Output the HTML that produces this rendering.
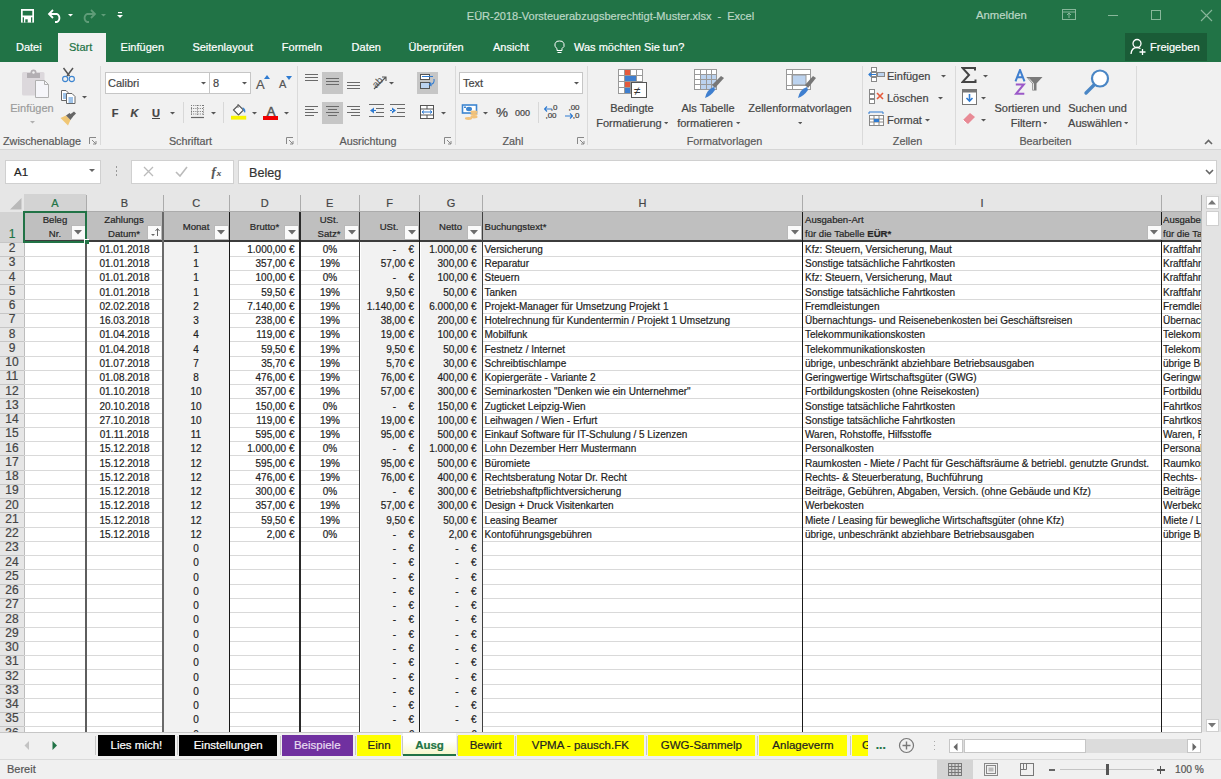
<!DOCTYPE html><html><head><meta charset="utf-8"><style>
html,body{margin:0;padding:0;}
body{width:1221px;height:779px;overflow:hidden;position:relative;background:#f1f1f1;font-family:"Liberation Sans",sans-serif;}
.t{position:absolute;white-space:nowrap;-webkit-text-stroke:0.2px currentColor;}
.r{position:absolute;}
</style></head><body>
<div class="r" style="left:0px;top:0px;width:1221px;height:62px;background:#217346;"></div>
<svg class="r" style="left:21px;top:9px;" width="13" height="14" viewBox="0 0 13 14"><rect x="0" y="0" width="13" height="13.6" fill="#fff"/><rect x="1.7" y="1.8" width="9.6" height="4.7" fill="#217346"/><rect x="1.7" y="8.3" width="1.3" height="5.3" fill="#217346"/><rect x="10" y="8.3" width="1.3" height="5.3" fill="#217346"/><rect x="4.3" y="10.3" width="2.4" height="3.3" fill="#217346"/></svg>
<svg class="r" style="left:47px;top:8px;" width="16" height="15" viewBox="0 0 16 15"><path d="M3 6 H10 A4.5 4.5 0 0 1 10 14 H8" fill="none" stroke="#fff" stroke-width="1.8"/><path d="M6 2 L2 6 L6 10" fill="none" stroke="#fff" stroke-width="1.8"/></svg>
<svg class="r" style="left:67.5px;top:14px;" width="5.0" height="3.5" viewBox="0 0 5.0 3.5"><path d="M0 0 L5.0 0 L2.5 2.5 Z" fill="#fff"/></svg>
<svg class="r" style="left:81px;top:8px;" width="16" height="15" viewBox="0 0 16 15"><path d="M13 6 H6 A4.5 4.5 0 0 0 6 14 H8" fill="none" stroke="#5f9c78" stroke-width="1.8"/><path d="M10 2 L14 6 L10 10" fill="none" stroke="#5f9c78" stroke-width="1.8"/></svg>
<svg class="r" style="left:100.5px;top:14px;" width="5.0" height="3.5" viewBox="0 0 5.0 3.5"><path d="M0 0 L5.0 0 L2.5 2.5 Z" fill="#5f9c78"/></svg>
<svg class="r" style="left:117px;top:12px;" width="6" height="7" viewBox="0 0 6 7"><rect x="1" y="0" width="4" height="1.2" fill="#fff"/><path d="M0 3 H6 L3 6 Z" fill="#fff"/></svg>
<div class="t" style="top:8.79px;font-size:11px;line-height:14px;height:14px;color:#bcd7c5;font-weight:normal;left:410.50px;width:400px;text-align:center;white-space:pre;">EÜR-2018-Vorsteuerabzugsberechtigt-Muster.xlsx  -  Excel</div>
<div class="t" style="top:7.88px;font-size:11.3px;line-height:15px;height:15px;color:#bcd7c5;font-weight:normal;left:976px;">Anmelden</div>
<svg class="r" style="left:1062px;top:9px;" width="14" height="12" viewBox="0 0 14 12"><rect x="0.5" y="0.5" width="13" height="10" fill="none" stroke="#88b79a" stroke-width="1"/><path d="M0.5 3 H13.5" stroke="#88b79a"/><path d="M7 9 V4 M5 6 L7 4 L9 6" fill="none" stroke="#88b79a"/></svg>
<div class="r" style="left:1108px;top:15px;width:10px;height:1px;background:#88b79a;"></div>
<svg class="r" style="left:1151px;top:10px;" width="11" height="11" viewBox="0 0 11 11"><rect x="0.5" y="0.5" width="9" height="9" fill="none" stroke="#88b79a"/></svg>
<svg class="r" style="left:1200px;top:9px;" width="13" height="13" viewBox="0 0 13 13"><path d="M1 1 L12 12 M12 1 L1 12" stroke="#88b79a" stroke-width="1.1"/></svg>
<div class="r" style="left:58px;top:33px;width:48px;height:29px;background:#f1f1f1;"></div>
<div class="t" style="top:40.19px;font-size:11px;line-height:14px;height:14px;color:#ffffff;font-weight:normal;left:16px;">Datei</div>
<div class="t" style="top:40.19px;font-size:11px;line-height:14px;height:14px;color:#ffffff;font-weight:normal;left:120.6px;">Einfügen</div>
<div class="t" style="top:40.19px;font-size:11px;line-height:14px;height:14px;color:#ffffff;font-weight:normal;left:192.4px;">Seitenlayout</div>
<div class="t" style="top:40.19px;font-size:11px;line-height:14px;height:14px;color:#ffffff;font-weight:normal;left:281.8px;">Formeln</div>
<div class="t" style="top:40.19px;font-size:11px;line-height:14px;height:14px;color:#ffffff;font-weight:normal;left:351.6px;">Daten</div>
<div class="t" style="top:40.19px;font-size:11px;line-height:14px;height:14px;color:#ffffff;font-weight:normal;left:408.6px;">Überprüfen</div>
<div class="t" style="top:40.19px;font-size:11px;line-height:14px;height:14px;color:#ffffff;font-weight:normal;left:493px;">Ansicht</div>
<div class="t" style="top:40.19px;font-size:11px;line-height:14px;height:14px;color:#ffffff;font-weight:normal;left:574px;">Was möchten Sie tun?</div>
<div class="t" style="top:40.19px;font-size:11px;line-height:14px;height:14px;color:#217346;font-weight:normal;left:69px;">Start</div>
<svg class="r" style="left:554px;top:40px;" width="11" height="14" viewBox="0 0 11 14"><path d="M5.5 1 A4 4 0 0 1 8 8.5 V10.5 H3 V8.5 A4 4 0 0 1 5.5 1 Z" fill="none" stroke="#fff" stroke-width="1"/><path d="M3.5 12.5 H7.5" stroke="#fff"/></svg>
<div class="r" style="left:1125px;top:33px;width:82px;height:28px;background:#1a5c37;"></div>
<svg class="r" style="left:1130px;top:38px;" width="17" height="18" viewBox="0 0 17 18"><circle cx="7" cy="5.5" r="4" fill="none" stroke="#fff" stroke-width="1.3"/><path d="M1 16 C1.5 11 4 9.5 7 9.5 C8.5 9.5 9.5 10 10.5 10.5" fill="none" stroke="#fff" stroke-width="1.3"/><path d="M12.5 11 V17 M9.5 14 H15.5" stroke="#fff" stroke-width="1.3"/></svg>
<div class="t" style="top:40.19px;font-size:11px;line-height:14px;height:14px;color:#fff;font-weight:normal;left:1150px;">Freigeben</div>
<div class="r" style="left:0px;top:62px;width:1221px;height:87px;background:#f1f1f1;"></div>
<div class="r" style="left:0px;top:149px;width:1221px;height:1px;background:#d6d6d6;"></div>
<div class="r" style="left:100px;top:66px;width:1px;height:79px;background:#dadada;"></div>
<div class="r" style="left:296.5px;top:66px;width:1px;height:79px;background:#dadada;"></div>
<div class="r" style="left:455px;top:66px;width:1px;height:79px;background:#dadada;"></div>
<div class="r" style="left:587px;top:66px;width:1px;height:79px;background:#dadada;"></div>
<div class="r" style="left:861.5px;top:66px;width:1px;height:79px;background:#dadada;"></div>
<div class="r" style="left:954.5px;top:66px;width:1px;height:79px;background:#dadada;"></div>
<div class="r" style="left:1136px;top:66px;width:1px;height:79px;background:#dadada;"></div>
<div class="t" style="top:134.26px;font-size:10.8px;line-height:14px;height:14px;color:#5a5a5a;font-weight:normal;left:3px;">Zwischenablage</div>
<div class="t" style="top:134.26px;font-size:10.8px;line-height:14px;height:14px;color:#5a5a5a;font-weight:normal;left:-9.50px;width:400px;text-align:center;">Schriftart</div>
<div class="t" style="top:134.26px;font-size:10.8px;line-height:14px;height:14px;color:#5a5a5a;font-weight:normal;left:168.00px;width:400px;text-align:center;">Ausrichtung</div>
<div class="t" style="top:134.26px;font-size:10.8px;line-height:14px;height:14px;color:#5a5a5a;font-weight:normal;left:313.00px;width:400px;text-align:center;">Zahl</div>
<div class="t" style="top:134.26px;font-size:10.8px;line-height:14px;height:14px;color:#5a5a5a;font-weight:normal;left:524.50px;width:400px;text-align:center;">Formatvorlagen</div>
<div class="t" style="top:134.26px;font-size:10.8px;line-height:14px;height:14px;color:#5a5a5a;font-weight:normal;left:707.50px;width:400px;text-align:center;">Zellen</div>
<div class="t" style="top:134.26px;font-size:10.8px;line-height:14px;height:14px;color:#5a5a5a;font-weight:normal;left:845.50px;width:400px;text-align:center;">Bearbeiten</div>
<svg class="r" style="left:89px;top:137px;" width="8" height="8" viewBox="0 0 8 8"><path d="M0.5 7 V0.5 H7" fill="none" stroke="#888"/><path d="M3 3 L7 7 M7 4 V7 H4" fill="none" stroke="#888"/></svg>
<svg class="r" style="left:286px;top:137px;" width="8" height="8" viewBox="0 0 8 8"><path d="M0.5 7 V0.5 H7" fill="none" stroke="#888"/><path d="M3 3 L7 7 M7 4 V7 H4" fill="none" stroke="#888"/></svg>
<svg class="r" style="left:444px;top:137px;" width="8" height="8" viewBox="0 0 8 8"><path d="M0.5 7 V0.5 H7" fill="none" stroke="#888"/><path d="M3 3 L7 7 M7 4 V7 H4" fill="none" stroke="#888"/></svg>
<svg class="r" style="left:577px;top:137px;" width="8" height="8" viewBox="0 0 8 8"><path d="M0.5 7 V0.5 H7" fill="none" stroke="#888"/><path d="M3 3 L7 7 M7 4 V7 H4" fill="none" stroke="#888"/></svg>
<svg class="r" style="left:1204px;top:139px;" width="9" height="6" viewBox="0 0 9 6"><path d="M1 5 L4.5 1.5 L8 5" fill="none" stroke="#666" stroke-width="1.6"/></svg>
<svg class="r" style="left:20px;top:68px;" width="32" height="32" viewBox="0 0 32 32"><rect x="2" y="4" width="22.5" height="23.5" rx="1.5" fill="#dcd8dc"/><rect x="7" y="5" width="13" height="5" fill="#b3afb3"/><circle cx="13.5" cy="4.5" r="3" fill="#b3afb3"/><circle cx="13.5" cy="4.5" r="1.2" fill="#f1f1f1"/><path d="M15.5 12.5 H24.5 L28.5 16.5 V29.5 H15.5 Z" fill="#f6f6fa" stroke="#b0b0b0"/><path d="M24.5 12.5 V16.5 H28.5" fill="none" stroke="#b0b0b0"/></svg>
<div class="t" style="top:101.19px;font-size:11px;line-height:14px;height:14px;color:#9b9b9b;font-weight:normal;left:-168.00px;width:400px;text-align:center;">Einfügen</div>
<svg class="r" style="left:29.5px;top:121px;" width="5.0" height="3.5" viewBox="0 0 5.0 3.5"><path d="M0 0 L5.0 0 L2.5 2.5 Z" fill="#b0b0b0"/></svg>
<svg class="r" style="left:60px;top:67px;" width="17" height="16" viewBox="0 0 17 16"><path d="M3.5 1 L9.5 9 M13 1 L7 9" stroke="#555" stroke-width="1.5"/><circle cx="5.2" cy="12" r="2.6" fill="none" stroke="#3d85d0" stroke-width="1.1"/><circle cx="11.8" cy="12" r="2.6" fill="none" stroke="#3d85d0" stroke-width="1.1"/></svg>
<svg class="r" style="left:60px;top:89px;" width="17" height="16" viewBox="0 0 17 16"><path d="M1.5 1.5 H6 L8 3.5 V11.5 H1.5 Z" fill="#fff" stroke="#666"/><path d="M3 5 H6 M3 7 H6 M3 9 H6" stroke="#3d85d0"/><path d="M6.5 4.5 H12 L15 7.5 V14.5 H6.5 Z" fill="#fff" stroke="#666"/><path d="M8.5 9 H13 M8.5 11 H13 M8.5 13 H13" stroke="#3d85d0"/></svg>
<svg class="r" style="left:81.5px;top:96px;" width="5.0" height="3.5" viewBox="0 0 5.0 3.5"><path d="M0 0 L5.0 0 L2.5 2.5 Z" fill="#555"/></svg>
<svg class="r" style="left:60px;top:111px;" width="17" height="15" viewBox="0 0 17 15"><path d="M0.5 7 L6 4.5 L10.5 9 L8 14.5 Z" fill="#f0c674"/><path d="M6 4.5 L9.5 2 L13 5.5 L10.5 9 Z" fill="#666"/><path d="M10 3.5 L14 0.5 L16 2.5 L12 6.5 Z" fill="#666"/></svg>
<div class="r" style="left:105px;top:72px;width:105px;height:22px;background:#fff;box-sizing:border-box;border:1px solid #c6c6c6;"></div>
<div class="r" style="left:209px;top:72px;width:42px;height:22px;background:#fff;box-sizing:border-box;border:1px solid #c6c6c6;"></div>
<div class="t" style="top:76.19px;font-size:11px;line-height:14px;height:14px;color:#444;font-weight:normal;left:108px;">Calibri</div>
<svg class="r" style="left:200.5px;top:82px;" width="5.0" height="3.5" viewBox="0 0 5.0 3.5"><path d="M0 0 L5.0 0 L2.5 2.5 Z" fill="#555"/></svg>
<div class="t" style="top:76.19px;font-size:11px;line-height:14px;height:14px;color:#444;font-weight:normal;left:213px;">8</div>
<svg class="r" style="left:241.5px;top:82px;" width="5.0" height="3.5" viewBox="0 0 5.0 3.5"><path d="M0 0 L5.0 0 L2.5 2.5 Z" fill="#555"/></svg>
<div class="t" style="top:76.00px;font-size:13px;line-height:17px;height:17px;color:#555;font-weight:normal;left:256px;">A</div>
<svg class="r" style="left:264px;top:75px;" width="6" height="4" viewBox="0 0 6 4"><path d="M0 4 L3 0 L6 4 Z" fill="#2f7bd1"/></svg>
<div class="t" style="top:77.19px;font-size:11px;line-height:14px;height:14px;color:#555;font-weight:normal;left:279px;">A</div>
<svg class="r" style="left:286px;top:76px;" width="6" height="4" viewBox="0 0 6 4"><path d="M0 0 L6 0 L3 4 Z" fill="#2f7bd1"/></svg>
<div class="t" style="top:105.69px;font-size:11px;line-height:14px;height:14px;color:#444;font-weight:bold;left:-85.00px;width:400px;text-align:center;">F</div>
<div class="t" style="top:105.69px;font-size:11px;line-height:14px;height:14px;color:#444;font-weight:bold;left:-65.50px;width:400px;text-align:center;font-style:italic;">K</div>
<div class="t" style="top:105.69px;font-size:11px;line-height:14px;height:14px;color:#444;font-weight:bold;left:-44.00px;width:400px;text-align:center;text-decoration:underline;">U</div>
<svg class="r" style="left:169.5px;top:112px;" width="5.0" height="3.5" viewBox="0 0 5.0 3.5"><path d="M0 0 L5.0 0 L2.5 2.5 Z" fill="#555"/></svg>
<div class="r" style="left:183px;top:102px;width:1px;height:21px;background:#d8d8d8;"></div>
<svg class="r" style="left:190px;top:104px;" width="15" height="15" viewBox="0 0 15 15"><path d="M1.5 1 V12 M7.5 1 V12 M13.5 1 V12 M1 1.5 H14 M1 4.5 H14 M1 7.5 H14 M1 10 H14" stroke="#777" stroke-width="1" stroke-dasharray="1 1.2"/><path d="M1 13.5 H14" stroke="#666" stroke-width="1.2"/></svg>
<svg class="r" style="left:210.5px;top:112px;" width="5.0" height="3.5" viewBox="0 0 5.0 3.5"><path d="M0 0 L5.0 0 L2.5 2.5 Z" fill="#555"/></svg>
<div class="r" style="left:223px;top:102px;width:1px;height:21px;background:#d8d8d8;"></div>
<svg class="r" style="left:230px;top:103px;" width="17" height="17" viewBox="0 0 17 17"><path d="M3.5 7 L8.5 2 L13.5 7 L8.5 12 Z" fill="#fff" stroke="#555" stroke-width="1.1"/><path d="M8 1 V5" stroke="#777"/><path d="M12.5 4 Q16.5 6 15 10 L13.5 8 Z" fill="#3d85d0"/><rect x="1" y="12.8" width="15.2" height="3.8" fill="#f8f400"/></svg>
<svg class="r" style="left:251.5px;top:112px;" width="5.0" height="3.5" viewBox="0 0 5.0 3.5"><path d="M0 0 L5.0 0 L2.5 2.5 Z" fill="#555"/></svg>
<div class="t" style="top:102.80px;font-size:13px;line-height:17px;height:17px;color:#555;font-weight:normal;left:71.00px;width:400px;text-align:center;-webkit-text-stroke:0.5px #555;">A</div>
<div class="r" style="left:263px;top:115.8px;width:15.3px;height:3.8px;background:#f00000;"></div>
<svg class="r" style="left:283.5px;top:112px;" width="5.0" height="3.5" viewBox="0 0 5.0 3.5"><path d="M0 0 L5.0 0 L2.5 2.5 Z" fill="#555"/></svg>
<div class="r" style="left:322px;top:72px;width:21px;height:22px;background:#c6c6c6;"></div>
<div class="r" style="left:322px;top:101.5px;width:21px;height:22px;background:#c6c6c6;"></div>
<div class="r" style="left:417px;top:72px;width:21px;height:22px;background:#c6c6c6;"></div>
<svg class="r" style="left:305px;top:74px;" width="14" height="9" viewBox="0 0 14 9"><rect x="0" y="0" width="13" height="1" fill="#6a6a6a"/><rect x="0" y="3" width="13" height="1" fill="#6a6a6a"/><rect x="0" y="6" width="13" height="1" fill="#6a6a6a"/></svg>
<svg class="r" style="left:326px;top:78px;" width="14" height="9" viewBox="0 0 14 9"><rect x="0" y="0" width="13" height="1" fill="#6a6a6a"/><rect x="0" y="3" width="13" height="1" fill="#6a6a6a"/><rect x="0" y="6" width="13" height="1" fill="#6a6a6a"/></svg>
<svg class="r" style="left:347px;top:82px;" width="14" height="9" viewBox="0 0 14 9"><rect x="0" y="0" width="13" height="1" fill="#6a6a6a"/><rect x="0" y="3" width="13" height="1" fill="#6a6a6a"/><rect x="0" y="6" width="13" height="1" fill="#6a6a6a"/></svg>
<svg class="r" style="left:370px;top:73px;" width="20" height="17" viewBox="0 0 20 17"><text x="1" y="12" font-size="10" fill="#555" transform="rotate(-45 8 8)" font-family="Liberation Sans">ab</text><path d="M4 16 L16 4 M12 4 H16 V8" fill="none" stroke="#555" stroke-width="1.1"/></svg>
<svg class="r" style="left:388.5px;top:82px;" width="5.0" height="3.5" viewBox="0 0 5.0 3.5"><path d="M0 0 L5.0 0 L2.5 2.5 Z" fill="#555"/></svg>
<svg class="r" style="left:305px;top:106px;" width="14" height="12" viewBox="0 0 14 12"><rect x="0" y="0" width="13" height="1" fill="#6a6a6a"/><rect x="0" y="3" width="9" height="1" fill="#6a6a6a"/><rect x="0" y="6" width="13" height="1" fill="#6a6a6a"/><rect x="0" y="9" width="9" height="1" fill="#6a6a6a"/></svg>
<svg class="r" style="left:326px;top:106px;" width="14" height="12" viewBox="0 0 14 12"><rect x="0" y="0" width="13" height="1" fill="#6a6a6a"/><rect x="2" y="3" width="9" height="1" fill="#6a6a6a"/><rect x="0" y="6" width="13" height="1" fill="#6a6a6a"/><rect x="2" y="9" width="9" height="1" fill="#6a6a6a"/></svg>
<svg class="r" style="left:347px;top:106px;" width="14" height="12" viewBox="0 0 14 12"><rect x="0" y="0" width="13" height="1" fill="#6a6a6a"/><rect x="4" y="3" width="9" height="1" fill="#6a6a6a"/><rect x="0" y="6" width="13" height="1" fill="#6a6a6a"/><rect x="4" y="9" width="9" height="1" fill="#6a6a6a"/></svg>
<svg class="r" style="left:369px;top:104px;" width="16" height="14" viewBox="0 0 16 14"><rect x="0" y="0" width="15" height="1" fill="#6a6a6a"/><rect x="7" y="4" width="8" height="1" fill="#6a6a6a"/><rect x="7" y="8" width="8" height="1" fill="#6a6a6a"/><rect x="0" y="12" width="15" height="1" fill="#6a6a6a"/><path d="M1 6.5 L5 3.5 V9.5 Z M4 6 H7 V7 H4 Z" fill="#2f7bd1"/></svg>
<svg class="r" style="left:390px;top:104px;" width="16" height="14" viewBox="0 0 16 14"><rect x="0" y="0" width="15" height="1" fill="#6a6a6a"/><rect x="7" y="4" width="8" height="1" fill="#6a6a6a"/><rect x="7" y="8" width="8" height="1" fill="#6a6a6a"/><rect x="0" y="12" width="15" height="1" fill="#6a6a6a"/><path d="M6 6.5 L2 3.5 V9.5 Z M0 6 H3 V7 H0 Z" fill="#2f7bd1"/></svg>
<svg class="r" style="left:419px;top:73px;" width="18" height="18" viewBox="0 0 18 18"><rect x="1.5" y="1.5" width="9" height="5" fill="#fff" stroke="#555"/><path d="M3 3.5 H14" stroke="#2f7bd1"/><rect x="1.5" y="9.5" width="9" height="6" fill="#bcd3ef" stroke="#555"/><path d="M15 6 Q16 11 11 11.5 M12 9.5 L10.5 11.5 L12.5 13" fill="none" stroke="#2f7bd1" stroke-width="1.1"/></svg>
<svg class="r" style="left:419px;top:104px;" width="16" height="16" viewBox="0 0 16 16"><rect x="1.5" y="1.5" width="13" height="13" fill="#fff" stroke="#555"/><path d="M1.5 5 H14.5 M1.5 11 H14.5 M8 1.5 V5 M8 11 V14.5" stroke="#555"/><path d="M3 8 H13 M3 8 L5 6.5 M3 8 L5 9.5 M13 8 L11 6.5 M13 8 L11 9.5" stroke="#2f7bd1" fill="none"/></svg>
<svg class="r" style="left:440.5px;top:112px;" width="5.0" height="3.5" viewBox="0 0 5.0 3.5"><path d="M0 0 L5.0 0 L2.5 2.5 Z" fill="#555"/></svg>
<div class="r" style="left:459px;top:72px;width:124px;height:22px;background:#fff;box-sizing:border-box;border:1px solid #c6c6c6;"></div>
<div class="t" style="top:76.19px;font-size:11px;line-height:14px;height:14px;color:#444;font-weight:normal;left:463px;">Text</div>
<svg class="r" style="left:573.5px;top:82px;" width="5.0" height="3.5" viewBox="0 0 5.0 3.5"><path d="M0 0 L5.0 0 L2.5 2.5 Z" fill="#555"/></svg>
<svg class="r" style="left:461px;top:103px;" width="18" height="18" viewBox="0 0 18 18"><rect x="1.5" y="2" width="14" height="8" fill="#fff" stroke="#3d85d0" stroke-width="1.6"/><ellipse cx="8" cy="6" rx="3" ry="2.2" fill="#3d85d0"/><rect x="3" y="3.5" width="2" height="1.5" fill="#3d85d0"/><ellipse cx="13" cy="9" rx="3.6" ry="1.4" fill="#f2c27a"/><ellipse cx="13" cy="11.5" rx="3.6" ry="1.4" fill="#f2c27a"/><ellipse cx="13" cy="14" rx="3.6" ry="1.4" fill="#f2c27a"/><ellipse cx="7.5" cy="15.5" rx="3.6" ry="1.4" fill="#f2c27a"/></svg>
<svg class="r" style="left:482.5px;top:112px;" width="5.0" height="3.5" viewBox="0 0 5.0 3.5"><path d="M0 0 L5.0 0 L2.5 2.5 Z" fill="#555"/></svg>
<div class="t" style="top:104.32px;font-size:13.5px;line-height:18px;height:18px;color:#444;font-weight:normal;left:302.00px;width:400px;text-align:center;">%</div>
<div class="t" style="top:106.88px;font-size:9px;line-height:12px;height:12px;color:#444;font-weight:normal;left:322.50px;width:400px;text-align:center;">000</div>
<div class="r" style="left:537.5px;top:102px;width:1px;height:21px;background:#d8d8d8;"></div>
<div class="t" style="top:103.23px;font-size:8px;line-height:10px;height:10px;color:#444;font-weight:normal;left:354.00px;width:400px;text-align:center;">,0</div>
<div class="t" style="top:110.73px;font-size:8px;line-height:10px;height:10px;color:#444;font-weight:normal;left:351.00px;width:400px;text-align:center;">,00</div>
<svg class="r" style="left:544px;top:106px;" width="8" height="6" viewBox="0 0 8 6"><path d="M0.5 3 H8 M3 0.5 L0.5 3 L3 5.5" fill="none" stroke="#2f7bd1" stroke-width="1.2"/></svg>
<div class="t" style="top:103.23px;font-size:8px;line-height:10px;height:10px;color:#444;font-weight:normal;left:374.00px;width:400px;text-align:center;">,00</div>
<div class="t" style="top:110.73px;font-size:8px;line-height:10px;height:10px;color:#444;font-weight:normal;left:376.00px;width:400px;text-align:center;">,0</div>
<svg class="r" style="left:565px;top:113px;" width="8" height="6" viewBox="0 0 8 6"><path d="M0 3 H7.5 M5 0.5 L7.5 3 L5 5.5" fill="none" stroke="#2f7bd1" stroke-width="1.2"/></svg>
<svg class="r" style="left:618px;top:69px;" width="30" height="30" viewBox="0 0 30 30"><rect x="0.5" y="0.5" width="24" height="24" fill="#fff" stroke="#999"/><path d="M0.5 6.5 H24.5 M0.5 12.5 H24.5 M0.5 18.5 H24.5 M6.5 0.5 V24.5 M12.5 0.5 V24.5 M18.5 0.5 V24.5" stroke="#999"/><rect x="7" y="1" width="5" height="5" fill="#e55a3c"/><rect x="7" y="7" width="11" height="5" fill="#3f7fcf"/><rect x="7" y="13" width="5" height="5" fill="#e55a3c"/><rect x="7" y="19" width="5" height="5" fill="#3f7fcf"/><rect x="13.5" y="13.5" width="15" height="15" fill="#fff" stroke="#555"/><text x="16" y="26" font-size="12" fill="#333" font-family="Liberation Sans">≠</text></svg>
<div class="t" style="top:101.19px;font-size:11px;line-height:14px;height:14px;color:#444;font-weight:normal;left:432.00px;width:400px;text-align:center;">Bedingte</div>
<div class="t" style="top:116.19px;font-size:11px;line-height:14px;height:14px;color:#444;font-weight:normal;left:429.00px;width:400px;text-align:center;">Formatierung</div>
<svg class="r" style="left:663.8px;top:122px;" width="4.4" height="3.2" viewBox="0 0 4.4 3.2"><path d="M0 0 L4.4 0 L2.2 2.2 Z" fill="#555"/></svg>
<svg class="r" style="left:694px;top:69px;" width="31" height="30" viewBox="0 0 31 30"><rect x="0.5" y="0.5" width="22" height="20" fill="#fff" stroke="#999"/><rect x="6" y="6" width="16" height="14" fill="#bcd3ef"/><path d="M0.5 5.5 H22.5 M0.5 10.5 H22.5 M0.5 15.5 H22.5 M6.5 0.5 V20.5 M12.5 0.5 V20.5 M17.5 0.5 V20.5" stroke="#999"/><path d="M18 16 L27 7 L30 9 L21 19 Z" fill="#777"/><path d="M11 29 Q13 20 20 18 L21 21 Q17 27 11 29 Z" fill="#3f7fcf"/></svg>
<div class="t" style="top:101.19px;font-size:11px;line-height:14px;height:14px;color:#444;font-weight:normal;left:508.00px;width:400px;text-align:center;">Als Tabelle</div>
<div class="t" style="top:116.19px;font-size:11px;line-height:14px;height:14px;color:#444;font-weight:normal;left:505.00px;width:400px;text-align:center;">formatieren</div>
<svg class="r" style="left:736.3px;top:122px;" width="4.4" height="3.2" viewBox="0 0 4.4 3.2"><path d="M0 0 L4.4 0 L2.2 2.2 Z" fill="#555"/></svg>
<svg class="r" style="left:786px;top:69px;" width="31" height="30" viewBox="0 0 31 30"><rect x="0.5" y="0.5" width="24" height="20" fill="#fff" stroke="#999"/><rect x="6" y="6" width="14" height="10" fill="#bcd3ef" stroke="#999"/><path d="M0.5 5.5 H24.5 M0.5 16.5 H24.5 M6.5 0.5 V20.5" stroke="#999"/><path d="M19 16 L27 7 L30 9 L22 19 Z" fill="#777"/><path d="M12 29 Q14 20 21 18 L22 21 Q18 27 12 29 Z" fill="#3f7fcf"/></svg>
<div class="t" style="top:101.19px;font-size:11px;line-height:14px;height:14px;color:#444;font-weight:normal;left:600.00px;width:400px;text-align:center;">Zellenformatvorlagen</div>
<svg class="r" style="left:797.8px;top:122px;" width="4.4" height="3.2" viewBox="0 0 4.4 3.2"><path d="M0 0 L4.4 0 L2.2 2.2 Z" fill="#555"/></svg>
<svg class="r" style="left:868px;top:67px;" width="17" height="16" viewBox="0 0 17 16"><rect x="3.5" y="0.5" width="5" height="4" fill="#fff" stroke="#888"/><rect x="3.5" y="10.5" width="5" height="4" fill="#fff" stroke="#888"/><rect x="3.5" y="5.5" width="5" height="4" fill="#fff" stroke="#888"/><rect x="9.5" y="5.5" width="7" height="4" fill="#bcd3ef" stroke="#888"/><path d="M1 7.5 H8 M3 5.5 L1 7.5 L3 9.5" fill="none" stroke="#2f7bd1" stroke-width="1.2"/></svg>
<div class="t" style="top:69.19px;font-size:11px;line-height:14px;height:14px;color:#444;font-weight:normal;left:887px;">Einfügen</div>
<svg class="r" style="left:940.5px;top:75px;" width="5.0" height="3.5" viewBox="0 0 5.0 3.5"><path d="M0 0 L5.0 0 L2.5 2.5 Z" fill="#555"/></svg>
<svg class="r" style="left:868px;top:89px;" width="17" height="16" viewBox="0 0 17 16"><rect x="1.5" y="0.5" width="5" height="4" fill="#fff" stroke="#888"/><rect x="1.5" y="10.5" width="5" height="4" fill="#fff" stroke="#888"/><rect x="1.5" y="5.5" width="5" height="4" fill="#fff" stroke="#888"/><path d="M9 4 L15 10 M15 4 L9 10" stroke="#e55a3c" stroke-width="1.6"/></svg>
<div class="t" style="top:91.19px;font-size:11px;line-height:14px;height:14px;color:#444;font-weight:normal;left:887px;">Löschen</div>
<svg class="r" style="left:937.5px;top:97px;" width="5.0" height="3.5" viewBox="0 0 5.0 3.5"><path d="M0 0 L5.0 0 L2.5 2.5 Z" fill="#555"/></svg>
<svg class="r" style="left:868px;top:111px;" width="17" height="16" viewBox="0 0 17 16"><path d="M1 1 H15 M1 1 V3 M15 1 V3" stroke="#2f7bd1"/><rect x="1.5" y="4.5" width="14" height="10" fill="#fff" stroke="#888"/><path d="M1.5 8 H15.5 M1.5 11 H15.5 M6 4.5 V14.5 M11 4.5 V14.5" stroke="#888"/><rect x="6" y="8" width="5" height="3" fill="#2f7bd1"/></svg>
<div class="t" style="top:113.19px;font-size:11px;line-height:14px;height:14px;color:#444;font-weight:normal;left:887px;">Format</div>
<svg class="r" style="left:925.0px;top:119px;" width="5.0" height="3.5" viewBox="0 0 5.0 3.5"><path d="M0 0 L5.0 0 L2.5 2.5 Z" fill="#555"/></svg>
<svg class="r" style="left:961px;top:67px;" width="16" height="16" viewBox="0 0 16 16"><path d="M14 3.5 V1 H1.5 L8 8 L1.5 15 H14.5 V12.5" fill="none" stroke="#444" stroke-width="2" stroke-linejoin="miter"/></svg>
<svg class="r" style="left:982.5px;top:75px;" width="5.0" height="3.5" viewBox="0 0 5.0 3.5"><path d="M0 0 L5.0 0 L2.5 2.5 Z" fill="#555"/></svg>
<svg class="r" style="left:962px;top:89px;" width="15" height="16" viewBox="0 0 15 16"><rect x="0.5" y="0.5" width="14" height="15" fill="#fff" stroke="#777"/><rect x="0.5" y="0.5" width="14" height="3" fill="#777"/><path d="M7.5 5 V12 M4.5 9 L7.5 12 L10.5 9" fill="none" stroke="#2f7bd1" stroke-width="1.6"/></svg>
<svg class="r" style="left:980.5px;top:97px;" width="5.0" height="3.5" viewBox="0 0 5.0 3.5"><path d="M0 0 L5.0 0 L2.5 2.5 Z" fill="#555"/></svg>
<svg class="r" style="left:962px;top:111px;" width="14" height="14" viewBox="0 0 14 14"><path d="M1 9 L8 2 L13 6 L6 13 Z" fill="#e88a95"/><path d="M1 9 L4 12" stroke="#fff"/></svg>
<svg class="r" style="left:980.5px;top:119px;" width="5.0" height="3.5" viewBox="0 0 5.0 3.5"><path d="M0 0 L5.0 0 L2.5 2.5 Z" fill="#555"/></svg>
<svg class="r" style="left:1014px;top:69px;" width="30" height="27" viewBox="0 0 30 27"><path d="M1.5 12.3 L6 1 L10.5 12.3 M3.3 8.3 H8.7" fill="none" stroke="#3f7fcf" stroke-width="2"/><path d="M1.8 15.5 H9.8 L2 24.8 H10.3" fill="none" stroke="#9b59c8" stroke-width="2"/><path d="M12.3 8 H28.5 L22.5 14.5 V21.6 H18.3 V14.5 Z" fill="#7a7a7a"/><path d="M14.8 9.3 L19.5 14.5 V20.8" fill="none" stroke="#f1f1f1" stroke-width="0.9"/></svg>
<div class="t" style="top:101.19px;font-size:11px;line-height:14px;height:14px;color:#444;font-weight:normal;left:827.50px;width:400px;text-align:center;">Sortieren und</div>
<div class="t" style="top:116.19px;font-size:11px;line-height:14px;height:14px;color:#444;font-weight:normal;left:826.00px;width:400px;text-align:center;">Filtern</div>
<svg class="r" style="left:1042.8px;top:122px;" width="4.4" height="3.2" viewBox="0 0 4.4 3.2"><path d="M0 0 L4.4 0 L2.2 2.2 Z" fill="#555"/></svg>
<svg class="r" style="left:1083px;top:68px;" width="28" height="28" viewBox="0 0 28 28"><path d="M3 25 L11.5 16.5" stroke="#4a86c5" stroke-width="3.4" stroke-linecap="round"/><circle cx="17" cy="10.5" r="8" fill="#fff" stroke="#4a86c5" stroke-width="2.2"/></svg>
<div class="t" style="top:101.19px;font-size:11px;line-height:14px;height:14px;color:#444;font-weight:normal;left:897.50px;width:400px;text-align:center;">Suchen und</div>
<div class="t" style="top:116.19px;font-size:11px;line-height:14px;height:14px;color:#444;font-weight:normal;left:895.00px;width:400px;text-align:center;">Auswählen</div>
<svg class="r" style="left:1123.8px;top:122px;" width="4.4" height="3.2" viewBox="0 0 4.4 3.2"><path d="M0 0 L4.4 0 L2.2 2.2 Z" fill="#555"/></svg>
<div class="r" style="left:0px;top:150px;width:1221px;height:44px;background:#e6e6e6;"></div>
<div class="r" style="left:5px;top:160px;width:96px;height:24px;background:#fff;box-sizing:border-box;border:1px solid #d0d0d0;"></div>
<div class="t" style="top:165.02px;font-size:11.5px;line-height:15px;height:15px;color:#222;font-weight:normal;left:14px;">A1</div>
<svg class="r" style="left:89px;top:169px;" width="6" height="4" viewBox="0 0 6 4"><path d="M0 0 L6 0 L3 3 Z" fill="#666"/></svg>
<div class="r" style="left:115.5px;top:166px;width:1.5px;height:1.5px;background:#999;"></div>
<div class="r" style="left:115.5px;top:170px;width:1.5px;height:1.5px;background:#999;"></div>
<div class="r" style="left:115.5px;top:174px;width:1.5px;height:1.5px;background:#999;"></div>
<div class="r" style="left:131px;top:160px;width:103px;height:24px;background:#fff;box-sizing:border-box;border:1px solid #d0d0d0;"></div>
<svg class="r" style="left:143px;top:166px;" width="11" height="11" viewBox="0 0 11 11"><path d="M1 1 L10 10 M10 1 L1 10" stroke="#bbb" stroke-width="1.3"/></svg>
<svg class="r" style="left:175px;top:166px;" width="13" height="11" viewBox="0 0 13 11"><path d="M1 6 L5 10 L12 1" fill="none" stroke="#bbb" stroke-width="1.6"/></svg>
<div class="t" style="top:164.17px;font-size:12.5px;line-height:16px;height:16px;color:#555;font-weight:normal;left:211.5px;font-family:'Liberation Serif',serif;font-style:italic;font-weight:bold;">f</div>
<div class="t" style="top:167.38px;font-size:9px;line-height:12px;height:12px;color:#555;font-weight:normal;left:216.8px;font-family:'Liberation Serif',serif;font-style:italic;font-weight:bold;">x</div>
<div class="r" style="left:238px;top:160px;width:979px;height:24px;background:#fff;box-sizing:border-box;border:1px solid #d0d0d0;"></div>
<div class="t" style="top:164.63px;font-size:12.6px;line-height:16px;height:16px;color:#333;font-weight:normal;left:249px;">Beleg</div>
<svg class="r" style="left:1205px;top:169px;" width="9" height="6" viewBox="0 0 9 6"><path d="M1 1 L4.5 4.5 L8 1" fill="none" stroke="#666" stroke-width="1.6"/></svg>
<div class="r" style="left:0px;top:194px;width:1202px;height:538.3px;background:#ffffff;"></div>
<div class="r" style="left:0px;top:194px;width:1202px;height:17px;background:#e6e6e6;"></div>
<div class="r" style="left:24px;top:194px;width:62px;height:17px;background:#d3d3d3;"></div>
<div class="r" style="left:0px;top:211px;width:1202px;height:1px;background:#ababab;"></div>
<svg class="r" style="left:9.5px;top:197.5px;" width="12" height="12" viewBox="0 0 12 12"><path d="M11.5 0 V11.5 H0 Z" fill="#b9b9b9"/></svg>
<div class="r" style="left:85.5px;top:195px;width:1px;height:17px;background:#ababab;"></div>
<div class="t" style="top:196.19px;font-size:11px;line-height:14px;height:14px;color:#217346;font-weight:normal;left:-145.00px;width:400px;text-align:center;">A</div>
<div class="r" style="left:162.5px;top:195px;width:1px;height:17px;background:#ababab;"></div>
<div class="t" style="top:196.19px;font-size:11px;line-height:14px;height:14px;color:#444;font-weight:normal;left:-75.50px;width:400px;text-align:center;">B</div>
<div class="r" style="left:229.0px;top:195px;width:1px;height:17px;background:#ababab;"></div>
<div class="t" style="top:196.19px;font-size:11px;line-height:14px;height:14px;color:#444;font-weight:normal;left:-3.75px;width:400px;text-align:center;">C</div>
<div class="r" style="left:299.5px;top:195px;width:1px;height:17px;background:#ababab;"></div>
<div class="t" style="top:196.19px;font-size:11px;line-height:14px;height:14px;color:#444;font-weight:normal;left:64.75px;width:400px;text-align:center;">D</div>
<div class="r" style="left:359.0px;top:195px;width:1px;height:17px;background:#ababab;"></div>
<div class="t" style="top:196.19px;font-size:11px;line-height:14px;height:14px;color:#444;font-weight:normal;left:129.75px;width:400px;text-align:center;">E</div>
<div class="r" style="left:419.0px;top:195px;width:1px;height:17px;background:#ababab;"></div>
<div class="t" style="top:196.19px;font-size:11px;line-height:14px;height:14px;color:#444;font-weight:normal;left:189.50px;width:400px;text-align:center;">F</div>
<div class="r" style="left:482.0px;top:195px;width:1px;height:17px;background:#ababab;"></div>
<div class="t" style="top:196.19px;font-size:11px;line-height:14px;height:14px;color:#444;font-weight:normal;left:251.00px;width:400px;text-align:center;">G</div>
<div class="r" style="left:802.0px;top:195px;width:1px;height:17px;background:#ababab;"></div>
<div class="t" style="top:196.19px;font-size:11px;line-height:14px;height:14px;color:#444;font-weight:normal;left:442.50px;width:400px;text-align:center;">H</div>
<div class="r" style="left:1161.0px;top:195px;width:1px;height:17px;background:#ababab;"></div>
<div class="t" style="top:196.19px;font-size:11px;line-height:14px;height:14px;color:#444;font-weight:normal;left:782.00px;width:400px;text-align:center;">I</div>
<div class="r" style="left:1201.0px;top:195px;width:1px;height:17px;background:#ababab;"></div>
<div class="r" style="left:0px;top:211px;width:24px;height:521.3px;background:#e6e6e6;"></div>
<div class="r" style="left:0px;top:211.5px;width:24px;height:30.099999999999994px;background:#d3d3d3;"></div>
<div class="r" style="left:24px;top:211px;width:1px;height:521.3px;background:#bdbdbd;"></div>
<div class="t" style="top:225.84px;font-size:12px;line-height:16px;height:16px;color:#217346;font-weight:normal;left:-188.00px;width:400px;text-align:center;">1</div>
<div class="r" style="left:0px;top:242px;width:24px;height:1px;background:#c6c6c6;"></div>
<div class="t" style="top:240.04px;font-size:12px;line-height:16px;height:16px;color:#444;font-weight:normal;left:-188.00px;width:400px;text-align:center;">2</div>
<div class="r" style="left:0px;top:256px;width:24px;height:1px;background:#c6c6c6;"></div>
<div class="t" style="top:254.30px;font-size:12px;line-height:16px;height:16px;color:#444;font-weight:normal;left:-188.00px;width:400px;text-align:center;">3</div>
<div class="r" style="left:0px;top:270px;width:24px;height:1px;background:#c6c6c6;"></div>
<div class="t" style="top:268.55px;font-size:12px;line-height:16px;height:16px;color:#444;font-weight:normal;left:-188.00px;width:400px;text-align:center;">4</div>
<div class="r" style="left:0px;top:284px;width:24px;height:1px;background:#c6c6c6;"></div>
<div class="t" style="top:282.81px;font-size:12px;line-height:16px;height:16px;color:#444;font-weight:normal;left:-188.00px;width:400px;text-align:center;">5</div>
<div class="r" style="left:0px;top:299px;width:24px;height:1px;background:#c6c6c6;"></div>
<div class="t" style="top:297.07px;font-size:12px;line-height:16px;height:16px;color:#444;font-weight:normal;left:-188.00px;width:400px;text-align:center;">6</div>
<div class="r" style="left:0px;top:313px;width:24px;height:1px;background:#c6c6c6;"></div>
<div class="t" style="top:311.32px;font-size:12px;line-height:16px;height:16px;color:#444;font-weight:normal;left:-188.00px;width:400px;text-align:center;">7</div>
<div class="r" style="left:0px;top:327px;width:24px;height:1px;background:#c6c6c6;"></div>
<div class="t" style="top:325.58px;font-size:12px;line-height:16px;height:16px;color:#444;font-weight:normal;left:-188.00px;width:400px;text-align:center;">8</div>
<div class="r" style="left:0px;top:341px;width:24px;height:1px;background:#c6c6c6;"></div>
<div class="t" style="top:339.83px;font-size:12px;line-height:16px;height:16px;color:#444;font-weight:normal;left:-188.00px;width:400px;text-align:center;">9</div>
<div class="r" style="left:0px;top:356px;width:24px;height:1px;background:#c6c6c6;"></div>
<div class="t" style="top:354.09px;font-size:12px;line-height:16px;height:16px;color:#444;font-weight:normal;left:-188.00px;width:400px;text-align:center;">10</div>
<div class="r" style="left:0px;top:370px;width:24px;height:1px;background:#c6c6c6;"></div>
<div class="t" style="top:368.35px;font-size:12px;line-height:16px;height:16px;color:#444;font-weight:normal;left:-188.00px;width:400px;text-align:center;">11</div>
<div class="r" style="left:0px;top:384px;width:24px;height:1px;background:#c6c6c6;"></div>
<div class="t" style="top:382.60px;font-size:12px;line-height:16px;height:16px;color:#444;font-weight:normal;left:-188.00px;width:400px;text-align:center;">12</div>
<div class="r" style="left:0px;top:398px;width:24px;height:1px;background:#c6c6c6;"></div>
<div class="t" style="top:396.86px;font-size:12px;line-height:16px;height:16px;color:#444;font-weight:normal;left:-188.00px;width:400px;text-align:center;">13</div>
<div class="r" style="left:0px;top:413px;width:24px;height:1px;background:#c6c6c6;"></div>
<div class="t" style="top:411.11px;font-size:12px;line-height:16px;height:16px;color:#444;font-weight:normal;left:-188.00px;width:400px;text-align:center;">14</div>
<div class="r" style="left:0px;top:427px;width:24px;height:1px;background:#c6c6c6;"></div>
<div class="t" style="top:425.37px;font-size:12px;line-height:16px;height:16px;color:#444;font-weight:normal;left:-188.00px;width:400px;text-align:center;">15</div>
<div class="r" style="left:0px;top:441px;width:24px;height:1px;background:#c6c6c6;"></div>
<div class="t" style="top:439.63px;font-size:12px;line-height:16px;height:16px;color:#444;font-weight:normal;left:-188.00px;width:400px;text-align:center;">16</div>
<div class="r" style="left:0px;top:455px;width:24px;height:1px;background:#c6c6c6;"></div>
<div class="t" style="top:453.88px;font-size:12px;line-height:16px;height:16px;color:#444;font-weight:normal;left:-188.00px;width:400px;text-align:center;">17</div>
<div class="r" style="left:0px;top:470px;width:24px;height:1px;background:#c6c6c6;"></div>
<div class="t" style="top:468.14px;font-size:12px;line-height:16px;height:16px;color:#444;font-weight:normal;left:-188.00px;width:400px;text-align:center;">18</div>
<div class="r" style="left:0px;top:484px;width:24px;height:1px;background:#c6c6c6;"></div>
<div class="t" style="top:482.39px;font-size:12px;line-height:16px;height:16px;color:#444;font-weight:normal;left:-188.00px;width:400px;text-align:center;">19</div>
<div class="r" style="left:0px;top:498px;width:24px;height:1px;background:#c6c6c6;"></div>
<div class="t" style="top:496.65px;font-size:12px;line-height:16px;height:16px;color:#444;font-weight:normal;left:-188.00px;width:400px;text-align:center;">20</div>
<div class="r" style="left:0px;top:512px;width:24px;height:1px;background:#c6c6c6;"></div>
<div class="t" style="top:510.91px;font-size:12px;line-height:16px;height:16px;color:#444;font-weight:normal;left:-188.00px;width:400px;text-align:center;">21</div>
<div class="r" style="left:0px;top:527px;width:24px;height:1px;background:#c6c6c6;"></div>
<div class="t" style="top:525.16px;font-size:12px;line-height:16px;height:16px;color:#444;font-weight:normal;left:-188.00px;width:400px;text-align:center;">22</div>
<div class="r" style="left:0px;top:541px;width:24px;height:1px;background:#c6c6c6;"></div>
<div class="t" style="top:539.42px;font-size:12px;line-height:16px;height:16px;color:#444;font-weight:normal;left:-188.00px;width:400px;text-align:center;">23</div>
<div class="r" style="left:0px;top:555px;width:24px;height:1px;background:#c6c6c6;"></div>
<div class="t" style="top:553.67px;font-size:12px;line-height:16px;height:16px;color:#444;font-weight:normal;left:-188.00px;width:400px;text-align:center;">24</div>
<div class="r" style="left:0px;top:569px;width:24px;height:1px;background:#c6c6c6;"></div>
<div class="t" style="top:567.93px;font-size:12px;line-height:16px;height:16px;color:#444;font-weight:normal;left:-188.00px;width:400px;text-align:center;">25</div>
<div class="r" style="left:0px;top:584px;width:24px;height:1px;background:#c6c6c6;"></div>
<div class="t" style="top:582.19px;font-size:12px;line-height:16px;height:16px;color:#444;font-weight:normal;left:-188.00px;width:400px;text-align:center;">26</div>
<div class="r" style="left:0px;top:598px;width:24px;height:1px;background:#c6c6c6;"></div>
<div class="t" style="top:596.44px;font-size:12px;line-height:16px;height:16px;color:#444;font-weight:normal;left:-188.00px;width:400px;text-align:center;">27</div>
<div class="r" style="left:0px;top:612px;width:24px;height:1px;background:#c6c6c6;"></div>
<div class="t" style="top:610.70px;font-size:12px;line-height:16px;height:16px;color:#444;font-weight:normal;left:-188.00px;width:400px;text-align:center;">28</div>
<div class="r" style="left:0px;top:627px;width:24px;height:1px;background:#c6c6c6;"></div>
<div class="t" style="top:624.95px;font-size:12px;line-height:16px;height:16px;color:#444;font-weight:normal;left:-188.00px;width:400px;text-align:center;">29</div>
<div class="r" style="left:0px;top:641px;width:24px;height:1px;background:#c6c6c6;"></div>
<div class="t" style="top:639.21px;font-size:12px;line-height:16px;height:16px;color:#444;font-weight:normal;left:-188.00px;width:400px;text-align:center;">30</div>
<div class="r" style="left:0px;top:655px;width:24px;height:1px;background:#c6c6c6;"></div>
<div class="t" style="top:653.47px;font-size:12px;line-height:16px;height:16px;color:#444;font-weight:normal;left:-188.00px;width:400px;text-align:center;">31</div>
<div class="r" style="left:0px;top:669px;width:24px;height:1px;background:#c6c6c6;"></div>
<div class="t" style="top:667.72px;font-size:12px;line-height:16px;height:16px;color:#444;font-weight:normal;left:-188.00px;width:400px;text-align:center;">32</div>
<div class="r" style="left:0px;top:684px;width:24px;height:1px;background:#c6c6c6;"></div>
<div class="t" style="top:681.98px;font-size:12px;line-height:16px;height:16px;color:#444;font-weight:normal;left:-188.00px;width:400px;text-align:center;">33</div>
<div class="r" style="left:0px;top:698px;width:24px;height:1px;background:#c6c6c6;"></div>
<div class="t" style="top:696.23px;font-size:12px;line-height:16px;height:16px;color:#444;font-weight:normal;left:-188.00px;width:400px;text-align:center;">34</div>
<div class="r" style="left:0px;top:712px;width:24px;height:1px;background:#c6c6c6;"></div>
<div class="t" style="top:710.49px;font-size:12px;line-height:16px;height:16px;color:#444;font-weight:normal;left:-188.00px;width:400px;text-align:center;">35</div>
<div class="r" style="left:0px;top:726px;width:24px;height:1px;background:#c6c6c6;"></div>
<div class="t" style="top:724.75px;font-size:12px;line-height:16px;height:16px;color:#444;font-weight:normal;left:-188.00px;width:400px;text-align:center;">36</div>
<div class="r" style="left:164px;top:241.6px;width:65.5px;height:490.69999999999993px;background:#f2f2f2;"></div>
<div class="r" style="left:360.5px;top:241.6px;width:59.0px;height:490.69999999999993px;background:#f2f2f2;"></div>
<div class="r" style="left:420.5px;top:241.6px;width:62.0px;height:490.69999999999993px;background:#f2f2f2;"></div>
<div class="r" style="left:24px;top:256px;width:139px;height:1px;background:#d9d9d9;"></div>
<div class="r" style="left:229.5px;top:256px;width:130.0px;height:1px;background:#d9d9d9;"></div>
<div class="r" style="left:482.5px;top:256px;width:719.5px;height:1px;background:#d9d9d9;"></div>
<div class="r" style="left:24px;top:270px;width:139px;height:1px;background:#d9d9d9;"></div>
<div class="r" style="left:229.5px;top:270px;width:130.0px;height:1px;background:#d9d9d9;"></div>
<div class="r" style="left:482.5px;top:270px;width:719.5px;height:1px;background:#d9d9d9;"></div>
<div class="r" style="left:24px;top:284px;width:139px;height:1px;background:#d9d9d9;"></div>
<div class="r" style="left:229.5px;top:284px;width:130.0px;height:1px;background:#d9d9d9;"></div>
<div class="r" style="left:482.5px;top:284px;width:719.5px;height:1px;background:#d9d9d9;"></div>
<div class="r" style="left:24px;top:299px;width:139px;height:1px;background:#d9d9d9;"></div>
<div class="r" style="left:229.5px;top:299px;width:130.0px;height:1px;background:#d9d9d9;"></div>
<div class="r" style="left:482.5px;top:299px;width:719.5px;height:1px;background:#d9d9d9;"></div>
<div class="r" style="left:24px;top:313px;width:139px;height:1px;background:#d9d9d9;"></div>
<div class="r" style="left:229.5px;top:313px;width:130.0px;height:1px;background:#d9d9d9;"></div>
<div class="r" style="left:482.5px;top:313px;width:719.5px;height:1px;background:#d9d9d9;"></div>
<div class="r" style="left:24px;top:327px;width:139px;height:1px;background:#d9d9d9;"></div>
<div class="r" style="left:229.5px;top:327px;width:130.0px;height:1px;background:#d9d9d9;"></div>
<div class="r" style="left:482.5px;top:327px;width:719.5px;height:1px;background:#d9d9d9;"></div>
<div class="r" style="left:24px;top:341px;width:139px;height:1px;background:#d9d9d9;"></div>
<div class="r" style="left:229.5px;top:341px;width:130.0px;height:1px;background:#d9d9d9;"></div>
<div class="r" style="left:482.5px;top:341px;width:719.5px;height:1px;background:#d9d9d9;"></div>
<div class="r" style="left:24px;top:356px;width:139px;height:1px;background:#d9d9d9;"></div>
<div class="r" style="left:229.5px;top:356px;width:130.0px;height:1px;background:#d9d9d9;"></div>
<div class="r" style="left:482.5px;top:356px;width:719.5px;height:1px;background:#d9d9d9;"></div>
<div class="r" style="left:24px;top:370px;width:139px;height:1px;background:#d9d9d9;"></div>
<div class="r" style="left:229.5px;top:370px;width:130.0px;height:1px;background:#d9d9d9;"></div>
<div class="r" style="left:482.5px;top:370px;width:719.5px;height:1px;background:#d9d9d9;"></div>
<div class="r" style="left:24px;top:384px;width:139px;height:1px;background:#d9d9d9;"></div>
<div class="r" style="left:229.5px;top:384px;width:130.0px;height:1px;background:#d9d9d9;"></div>
<div class="r" style="left:482.5px;top:384px;width:719.5px;height:1px;background:#d9d9d9;"></div>
<div class="r" style="left:24px;top:398px;width:139px;height:1px;background:#d9d9d9;"></div>
<div class="r" style="left:229.5px;top:398px;width:130.0px;height:1px;background:#d9d9d9;"></div>
<div class="r" style="left:482.5px;top:398px;width:719.5px;height:1px;background:#d9d9d9;"></div>
<div class="r" style="left:24px;top:413px;width:139px;height:1px;background:#d9d9d9;"></div>
<div class="r" style="left:229.5px;top:413px;width:130.0px;height:1px;background:#d9d9d9;"></div>
<div class="r" style="left:482.5px;top:413px;width:719.5px;height:1px;background:#d9d9d9;"></div>
<div class="r" style="left:24px;top:427px;width:139px;height:1px;background:#d9d9d9;"></div>
<div class="r" style="left:229.5px;top:427px;width:130.0px;height:1px;background:#d9d9d9;"></div>
<div class="r" style="left:482.5px;top:427px;width:719.5px;height:1px;background:#d9d9d9;"></div>
<div class="r" style="left:24px;top:441px;width:139px;height:1px;background:#d9d9d9;"></div>
<div class="r" style="left:229.5px;top:441px;width:130.0px;height:1px;background:#d9d9d9;"></div>
<div class="r" style="left:482.5px;top:441px;width:719.5px;height:1px;background:#d9d9d9;"></div>
<div class="r" style="left:24px;top:455px;width:139px;height:1px;background:#d9d9d9;"></div>
<div class="r" style="left:229.5px;top:455px;width:130.0px;height:1px;background:#d9d9d9;"></div>
<div class="r" style="left:482.5px;top:455px;width:719.5px;height:1px;background:#d9d9d9;"></div>
<div class="r" style="left:24px;top:470px;width:139px;height:1px;background:#d9d9d9;"></div>
<div class="r" style="left:229.5px;top:470px;width:130.0px;height:1px;background:#d9d9d9;"></div>
<div class="r" style="left:482.5px;top:470px;width:719.5px;height:1px;background:#d9d9d9;"></div>
<div class="r" style="left:24px;top:484px;width:139px;height:1px;background:#d9d9d9;"></div>
<div class="r" style="left:229.5px;top:484px;width:130.0px;height:1px;background:#d9d9d9;"></div>
<div class="r" style="left:482.5px;top:484px;width:719.5px;height:1px;background:#d9d9d9;"></div>
<div class="r" style="left:24px;top:498px;width:139px;height:1px;background:#d9d9d9;"></div>
<div class="r" style="left:229.5px;top:498px;width:130.0px;height:1px;background:#d9d9d9;"></div>
<div class="r" style="left:482.5px;top:498px;width:719.5px;height:1px;background:#d9d9d9;"></div>
<div class="r" style="left:24px;top:512px;width:139px;height:1px;background:#d9d9d9;"></div>
<div class="r" style="left:229.5px;top:512px;width:130.0px;height:1px;background:#d9d9d9;"></div>
<div class="r" style="left:482.5px;top:512px;width:719.5px;height:1px;background:#d9d9d9;"></div>
<div class="r" style="left:24px;top:527px;width:139px;height:1px;background:#d9d9d9;"></div>
<div class="r" style="left:229.5px;top:527px;width:130.0px;height:1px;background:#d9d9d9;"></div>
<div class="r" style="left:482.5px;top:527px;width:719.5px;height:1px;background:#d9d9d9;"></div>
<div class="r" style="left:24px;top:541px;width:139px;height:1px;background:#d9d9d9;"></div>
<div class="r" style="left:229.5px;top:541px;width:130.0px;height:1px;background:#d9d9d9;"></div>
<div class="r" style="left:482.5px;top:541px;width:719.5px;height:1px;background:#d9d9d9;"></div>
<div class="r" style="left:24px;top:555px;width:139px;height:1px;background:#d9d9d9;"></div>
<div class="r" style="left:229.5px;top:555px;width:130.0px;height:1px;background:#d9d9d9;"></div>
<div class="r" style="left:482.5px;top:555px;width:719.5px;height:1px;background:#d9d9d9;"></div>
<div class="r" style="left:24px;top:569px;width:139px;height:1px;background:#d9d9d9;"></div>
<div class="r" style="left:229.5px;top:569px;width:130.0px;height:1px;background:#d9d9d9;"></div>
<div class="r" style="left:482.5px;top:569px;width:719.5px;height:1px;background:#d9d9d9;"></div>
<div class="r" style="left:24px;top:584px;width:139px;height:1px;background:#d9d9d9;"></div>
<div class="r" style="left:229.5px;top:584px;width:130.0px;height:1px;background:#d9d9d9;"></div>
<div class="r" style="left:482.5px;top:584px;width:719.5px;height:1px;background:#d9d9d9;"></div>
<div class="r" style="left:24px;top:598px;width:139px;height:1px;background:#d9d9d9;"></div>
<div class="r" style="left:229.5px;top:598px;width:130.0px;height:1px;background:#d9d9d9;"></div>
<div class="r" style="left:482.5px;top:598px;width:719.5px;height:1px;background:#d9d9d9;"></div>
<div class="r" style="left:24px;top:612px;width:139px;height:1px;background:#d9d9d9;"></div>
<div class="r" style="left:229.5px;top:612px;width:130.0px;height:1px;background:#d9d9d9;"></div>
<div class="r" style="left:482.5px;top:612px;width:719.5px;height:1px;background:#d9d9d9;"></div>
<div class="r" style="left:24px;top:627px;width:139px;height:1px;background:#d9d9d9;"></div>
<div class="r" style="left:229.5px;top:627px;width:130.0px;height:1px;background:#d9d9d9;"></div>
<div class="r" style="left:482.5px;top:627px;width:719.5px;height:1px;background:#d9d9d9;"></div>
<div class="r" style="left:24px;top:641px;width:139px;height:1px;background:#d9d9d9;"></div>
<div class="r" style="left:229.5px;top:641px;width:130.0px;height:1px;background:#d9d9d9;"></div>
<div class="r" style="left:482.5px;top:641px;width:719.5px;height:1px;background:#d9d9d9;"></div>
<div class="r" style="left:24px;top:655px;width:139px;height:1px;background:#d9d9d9;"></div>
<div class="r" style="left:229.5px;top:655px;width:130.0px;height:1px;background:#d9d9d9;"></div>
<div class="r" style="left:482.5px;top:655px;width:719.5px;height:1px;background:#d9d9d9;"></div>
<div class="r" style="left:24px;top:669px;width:139px;height:1px;background:#d9d9d9;"></div>
<div class="r" style="left:229.5px;top:669px;width:130.0px;height:1px;background:#d9d9d9;"></div>
<div class="r" style="left:482.5px;top:669px;width:719.5px;height:1px;background:#d9d9d9;"></div>
<div class="r" style="left:24px;top:684px;width:139px;height:1px;background:#d9d9d9;"></div>
<div class="r" style="left:229.5px;top:684px;width:130.0px;height:1px;background:#d9d9d9;"></div>
<div class="r" style="left:482.5px;top:684px;width:719.5px;height:1px;background:#d9d9d9;"></div>
<div class="r" style="left:24px;top:698px;width:139px;height:1px;background:#d9d9d9;"></div>
<div class="r" style="left:229.5px;top:698px;width:130.0px;height:1px;background:#d9d9d9;"></div>
<div class="r" style="left:482.5px;top:698px;width:719.5px;height:1px;background:#d9d9d9;"></div>
<div class="r" style="left:24px;top:712px;width:139px;height:1px;background:#d9d9d9;"></div>
<div class="r" style="left:229.5px;top:712px;width:130.0px;height:1px;background:#d9d9d9;"></div>
<div class="r" style="left:482.5px;top:712px;width:719.5px;height:1px;background:#d9d9d9;"></div>
<div class="r" style="left:24px;top:726px;width:139px;height:1px;background:#d9d9d9;"></div>
<div class="r" style="left:229.5px;top:726px;width:130.0px;height:1px;background:#d9d9d9;"></div>
<div class="r" style="left:482.5px;top:726px;width:719.5px;height:1px;background:#d9d9d9;"></div>
<div class="r" style="left:25px;top:211.5px;width:1177px;height:30.099999999999994px;background:#bfbfbf;"></div>
<div class="r" style="left:24px;top:240px;width:1178px;height:2px;background:#3c3c3c;"></div>
<div class="r" style="left:85.4px;top:211.5px;width:1.8px;height:520.8px;background:#5e5e5e;"></div>
<div class="r" style="left:162.4px;top:211.5px;width:1.8px;height:520.8px;background:#6a6a6a;"></div>
<div class="r" style="left:228.9px;top:211.5px;width:1.4px;height:520.8px;background:#1a1a1a;"></div>
<div class="r" style="left:299.4px;top:211.5px;width:1.4px;height:520.8px;background:#2a2a2a;"></div>
<div class="r" style="left:358.9px;top:211.5px;width:1.4px;height:520.8px;background:#404040;"></div>
<div class="r" style="left:418.9px;top:211.5px;width:1.4px;height:520.8px;background:#1a1a1a;"></div>
<div class="r" style="left:481.9px;top:211.5px;width:1.4px;height:520.8px;background:#404040;"></div>
<div class="r" style="left:801.9px;top:211.5px;width:1.4px;height:520.8px;background:#1a1a1a;"></div>
<div class="r" style="left:1160.9px;top:211.5px;width:1.4px;height:520.8px;background:#1a1a1a;"></div>
<div class="r" style="left:1201px;top:211px;width:1px;height:521.3px;background:#bdbdbd;"></div>
<div class="r" style="left:70.5px;top:224.5px;width:15px;height:15px;background:#fafafa;box-sizing:border-box;border:1px solid #b9b9b9;"></div>
<svg class="r" style="left:74.0px;top:229.5px;" width="8" height="5" viewBox="0 0 8 5"><path d="M0 0 H8 L4 4.5 Z" fill="#6b6b6b"/></svg>
<div class="r" style="left:213.5px;top:224.5px;width:15px;height:15px;background:#fafafa;box-sizing:border-box;border:1px solid #b9b9b9;"></div>
<svg class="r" style="left:217.0px;top:229.5px;" width="8" height="5" viewBox="0 0 8 5"><path d="M0 0 H8 L4 4.5 Z" fill="#6b6b6b"/></svg>
<div class="r" style="left:284px;top:224.5px;width:15px;height:15px;background:#fafafa;box-sizing:border-box;border:1px solid #b9b9b9;"></div>
<svg class="r" style="left:287.5px;top:229.5px;" width="8" height="5" viewBox="0 0 8 5"><path d="M0 0 H8 L4 4.5 Z" fill="#6b6b6b"/></svg>
<div class="r" style="left:344px;top:224.5px;width:15px;height:15px;background:#fafafa;box-sizing:border-box;border:1px solid #b9b9b9;"></div>
<svg class="r" style="left:347.5px;top:229.5px;" width="8" height="5" viewBox="0 0 8 5"><path d="M0 0 H8 L4 4.5 Z" fill="#6b6b6b"/></svg>
<div class="r" style="left:404px;top:224.5px;width:15px;height:15px;background:#fafafa;box-sizing:border-box;border:1px solid #b9b9b9;"></div>
<svg class="r" style="left:407.5px;top:229.5px;" width="8" height="5" viewBox="0 0 8 5"><path d="M0 0 H8 L4 4.5 Z" fill="#6b6b6b"/></svg>
<div class="r" style="left:466.5px;top:224.5px;width:15px;height:15px;background:#fafafa;box-sizing:border-box;border:1px solid #b9b9b9;"></div>
<svg class="r" style="left:470.0px;top:229.5px;" width="8" height="5" viewBox="0 0 8 5"><path d="M0 0 H8 L4 4.5 Z" fill="#6b6b6b"/></svg>
<div class="r" style="left:787px;top:224.5px;width:15px;height:15px;background:#fafafa;box-sizing:border-box;border:1px solid #b9b9b9;"></div>
<svg class="r" style="left:790.5px;top:229.5px;" width="8" height="5" viewBox="0 0 8 5"><path d="M0 0 H8 L4 4.5 Z" fill="#6b6b6b"/></svg>
<div class="r" style="left:1146.5px;top:224.5px;width:15px;height:15px;background:#fafafa;box-sizing:border-box;border:1px solid #b9b9b9;"></div>
<svg class="r" style="left:1150.0px;top:229.5px;" width="8" height="5" viewBox="0 0 8 5"><path d="M0 0 H8 L4 4.5 Z" fill="#6b6b6b"/></svg>
<div class="r" style="left:147px;top:224.5px;width:15px;height:15px;background:#fafafa;box-sizing:border-box;border:1px solid #b9b9b9;"></div>
<svg class="r" style="left:150px;top:226.5px;" width="10" height="10" viewBox="0 0 10 10"><path d="M1 7 H5 L3 9 Z" fill="#666"/><path d="M7.5 9 V2 M5.5 4 L7.5 1.5 L9.5 4" fill="none" stroke="#666" stroke-width="1"/></svg>
<div class="t" style="top:213.87px;font-size:9.6px;line-height:12px;height:12px;color:#262626;font-weight:normal;left:-145.00px;width:400px;text-align:center;">Beleg</div>
<div class="t" style="top:228.37px;font-size:9.6px;line-height:12px;height:12px;color:#262626;font-weight:normal;left:-145.00px;width:400px;text-align:center;">Nr.</div>
<div class="t" style="top:213.87px;font-size:9.6px;line-height:12px;height:12px;color:#262626;font-weight:normal;left:-76.00px;width:400px;text-align:center;">Zahlungs</div>
<div class="t" style="top:228.37px;font-size:9.6px;line-height:12px;height:12px;color:#262626;font-weight:normal;left:-76.00px;width:400px;text-align:center;">Datum*</div>
<div class="t" style="top:221.47px;font-size:9.6px;line-height:12px;height:12px;color:#262626;font-weight:normal;left:-4.00px;width:400px;text-align:center;">Monat</div>
<div class="t" style="top:221.47px;font-size:9.6px;line-height:12px;height:12px;color:#262626;font-weight:normal;left:64.50px;width:400px;text-align:center;">Brutto*</div>
<div class="t" style="top:213.87px;font-size:9.6px;line-height:12px;height:12px;color:#262626;font-weight:normal;left:129.00px;width:400px;text-align:center;">USt.</div>
<div class="t" style="top:228.37px;font-size:9.6px;line-height:12px;height:12px;color:#262626;font-weight:normal;left:129.00px;width:400px;text-align:center;">Satz*</div>
<div class="t" style="top:221.47px;font-size:9.6px;line-height:12px;height:12px;color:#262626;font-weight:normal;left:189.00px;width:400px;text-align:center;">USt.</div>
<div class="t" style="top:221.47px;font-size:9.6px;line-height:12px;height:12px;color:#262626;font-weight:normal;left:250.50px;width:400px;text-align:center;">Netto</div>
<div class="t" style="top:221.47px;font-size:9.6px;line-height:12px;height:12px;color:#262626;font-weight:normal;left:484.5px;">Buchungstext*</div>
<div class="t" style="top:213.87px;font-size:9.6px;line-height:12px;height:12px;color:#262626;font-weight:normal;left:805px;">Ausgaben-Art</div>
<div class="t" style="top:228.37px;font-size:9.6px;line-height:12px;height:12px;color:#262626;font-weight:normal;left:805px;">für die Tabelle <b>EÜR*</b></div>
<div class="t" style="top:213.87px;font-size:9.6px;line-height:12px;height:12px;color:#262626;font-weight:normal;left:1163px;clip-path:inset(0 calc(100% - 38px) 0 0);">Ausgaben-Art</div>
<div class="t" style="top:228.37px;font-size:9.6px;line-height:12px;height:12px;color:#262626;font-weight:normal;left:1163px;clip-path:inset(0 calc(100% - 38px) 0 0);">für die Tabelle</div>
<div class="t" style="top:242.83px;font-size:10px;line-height:13px;height:13px;color:#1e1e1e;font-weight:normal;left:-75.50px;width:400px;text-align:center;">01.01.2018</div>
<div class="t" style="top:242.83px;font-size:10px;line-height:13px;height:13px;color:#1e1e1e;font-weight:normal;left:-4.00px;width:400px;text-align:center;">1</div>
<div class="t" style="top:242.83px;font-size:10px;line-height:13px;height:13px;color:#1e1e1e;font-weight:normal;right:926.5px;text-align:right;">1.000,00 €</div>
<div class="t" style="top:242.83px;font-size:10px;line-height:13px;height:13px;color:#1e1e1e;font-weight:normal;left:130.00px;width:400px;text-align:center;">0%</div>
<div class="t" style="top:242.83px;font-size:10px;line-height:13px;height:13px;color:#1e1e1e;font-weight:normal;right:825px;text-align:right;">-</div>
<div class="t" style="top:242.83px;font-size:10px;line-height:13px;height:13px;color:#1e1e1e;font-weight:normal;right:807px;text-align:right;">€</div>
<div class="t" style="top:242.83px;font-size:10px;line-height:13px;height:13px;color:#1e1e1e;font-weight:normal;right:744.5px;text-align:right;">1.000,00 €</div>
<div class="t" style="top:242.83px;font-size:10px;line-height:13px;height:13px;color:#1e1e1e;font-weight:normal;left:484.5px;">Versicherung</div>
<div class="t" style="top:242.83px;font-size:10px;line-height:13px;height:13px;color:#1e1e1e;font-weight:normal;left:805px;">Kfz: Steuern, Versicherung, Maut</div>
<div class="t" style="top:242.83px;font-size:10px;line-height:13px;height:13px;color:#1e1e1e;font-weight:normal;left:1163px;clip-path:inset(0 calc(100% - 38px) 0 0);">Kraftfahrzeugkosten</div>
<div class="t" style="top:257.09px;font-size:10px;line-height:13px;height:13px;color:#1e1e1e;font-weight:normal;left:-75.50px;width:400px;text-align:center;">01.01.2018</div>
<div class="t" style="top:257.09px;font-size:10px;line-height:13px;height:13px;color:#1e1e1e;font-weight:normal;left:-4.00px;width:400px;text-align:center;">1</div>
<div class="t" style="top:257.09px;font-size:10px;line-height:13px;height:13px;color:#1e1e1e;font-weight:normal;right:926.5px;text-align:right;">357,00 €</div>
<div class="t" style="top:257.09px;font-size:10px;line-height:13px;height:13px;color:#1e1e1e;font-weight:normal;left:130.00px;width:400px;text-align:center;">19%</div>
<div class="t" style="top:257.09px;font-size:10px;line-height:13px;height:13px;color:#1e1e1e;font-weight:normal;right:807px;text-align:right;">57,00 €</div>
<div class="t" style="top:257.09px;font-size:10px;line-height:13px;height:13px;color:#1e1e1e;font-weight:normal;right:744.5px;text-align:right;">300,00 €</div>
<div class="t" style="top:257.09px;font-size:10px;line-height:13px;height:13px;color:#1e1e1e;font-weight:normal;left:484.5px;">Reparatur</div>
<div class="t" style="top:257.09px;font-size:10px;line-height:13px;height:13px;color:#1e1e1e;font-weight:normal;left:805px;">Sonstige tatsächliche Fahrtkosten</div>
<div class="t" style="top:257.09px;font-size:10px;line-height:13px;height:13px;color:#1e1e1e;font-weight:normal;left:1163px;clip-path:inset(0 calc(100% - 38px) 0 0);">Kraftfahrzeugkosten</div>
<div class="t" style="top:271.35px;font-size:10px;line-height:13px;height:13px;color:#1e1e1e;font-weight:normal;left:-75.50px;width:400px;text-align:center;">01.01.2018</div>
<div class="t" style="top:271.35px;font-size:10px;line-height:13px;height:13px;color:#1e1e1e;font-weight:normal;left:-4.00px;width:400px;text-align:center;">1</div>
<div class="t" style="top:271.35px;font-size:10px;line-height:13px;height:13px;color:#1e1e1e;font-weight:normal;right:926.5px;text-align:right;">100,00 €</div>
<div class="t" style="top:271.35px;font-size:10px;line-height:13px;height:13px;color:#1e1e1e;font-weight:normal;left:130.00px;width:400px;text-align:center;">0%</div>
<div class="t" style="top:271.35px;font-size:10px;line-height:13px;height:13px;color:#1e1e1e;font-weight:normal;right:825px;text-align:right;">-</div>
<div class="t" style="top:271.35px;font-size:10px;line-height:13px;height:13px;color:#1e1e1e;font-weight:normal;right:807px;text-align:right;">€</div>
<div class="t" style="top:271.35px;font-size:10px;line-height:13px;height:13px;color:#1e1e1e;font-weight:normal;right:744.5px;text-align:right;">100,00 €</div>
<div class="t" style="top:271.35px;font-size:10px;line-height:13px;height:13px;color:#1e1e1e;font-weight:normal;left:484.5px;">Steuern</div>
<div class="t" style="top:271.35px;font-size:10px;line-height:13px;height:13px;color:#1e1e1e;font-weight:normal;left:805px;">Kfz: Steuern, Versicherung, Maut</div>
<div class="t" style="top:271.35px;font-size:10px;line-height:13px;height:13px;color:#1e1e1e;font-weight:normal;left:1163px;clip-path:inset(0 calc(100% - 38px) 0 0);">Kraftfahrzeugkosten</div>
<div class="t" style="top:285.60px;font-size:10px;line-height:13px;height:13px;color:#1e1e1e;font-weight:normal;left:-75.50px;width:400px;text-align:center;">01.01.2018</div>
<div class="t" style="top:285.60px;font-size:10px;line-height:13px;height:13px;color:#1e1e1e;font-weight:normal;left:-4.00px;width:400px;text-align:center;">1</div>
<div class="t" style="top:285.60px;font-size:10px;line-height:13px;height:13px;color:#1e1e1e;font-weight:normal;right:926.5px;text-align:right;">59,50 €</div>
<div class="t" style="top:285.60px;font-size:10px;line-height:13px;height:13px;color:#1e1e1e;font-weight:normal;left:130.00px;width:400px;text-align:center;">19%</div>
<div class="t" style="top:285.60px;font-size:10px;line-height:13px;height:13px;color:#1e1e1e;font-weight:normal;right:807px;text-align:right;">9,50 €</div>
<div class="t" style="top:285.60px;font-size:10px;line-height:13px;height:13px;color:#1e1e1e;font-weight:normal;right:744.5px;text-align:right;">50,00 €</div>
<div class="t" style="top:285.60px;font-size:10px;line-height:13px;height:13px;color:#1e1e1e;font-weight:normal;left:484.5px;">Tanken</div>
<div class="t" style="top:285.60px;font-size:10px;line-height:13px;height:13px;color:#1e1e1e;font-weight:normal;left:805px;">Sonstige tatsächliche Fahrtkosten</div>
<div class="t" style="top:285.60px;font-size:10px;line-height:13px;height:13px;color:#1e1e1e;font-weight:normal;left:1163px;clip-path:inset(0 calc(100% - 38px) 0 0);">Kraftfahrzeugkosten</div>
<div class="t" style="top:299.86px;font-size:10px;line-height:13px;height:13px;color:#1e1e1e;font-weight:normal;left:-75.50px;width:400px;text-align:center;">02.02.2018</div>
<div class="t" style="top:299.86px;font-size:10px;line-height:13px;height:13px;color:#1e1e1e;font-weight:normal;left:-4.00px;width:400px;text-align:center;">2</div>
<div class="t" style="top:299.86px;font-size:10px;line-height:13px;height:13px;color:#1e1e1e;font-weight:normal;right:926.5px;text-align:right;">7.140,00 €</div>
<div class="t" style="top:299.86px;font-size:10px;line-height:13px;height:13px;color:#1e1e1e;font-weight:normal;left:130.00px;width:400px;text-align:center;">19%</div>
<div class="t" style="top:299.86px;font-size:10px;line-height:13px;height:13px;color:#1e1e1e;font-weight:normal;right:807px;text-align:right;">1.140,00 €</div>
<div class="t" style="top:299.86px;font-size:10px;line-height:13px;height:13px;color:#1e1e1e;font-weight:normal;right:744.5px;text-align:right;">6.000,00 €</div>
<div class="t" style="top:299.86px;font-size:10px;line-height:13px;height:13px;color:#1e1e1e;font-weight:normal;left:484.5px;">Projekt-Manager für Umsetzung Projekt 1</div>
<div class="t" style="top:299.86px;font-size:10px;line-height:13px;height:13px;color:#1e1e1e;font-weight:normal;left:805px;">Fremdleistungen</div>
<div class="t" style="top:299.86px;font-size:10px;line-height:13px;height:13px;color:#1e1e1e;font-weight:normal;left:1163px;clip-path:inset(0 calc(100% - 38px) 0 0);">Fremdleistungen</div>
<div class="t" style="top:314.12px;font-size:10px;line-height:13px;height:13px;color:#1e1e1e;font-weight:normal;left:-75.50px;width:400px;text-align:center;">16.03.2018</div>
<div class="t" style="top:314.12px;font-size:10px;line-height:13px;height:13px;color:#1e1e1e;font-weight:normal;left:-4.00px;width:400px;text-align:center;">3</div>
<div class="t" style="top:314.12px;font-size:10px;line-height:13px;height:13px;color:#1e1e1e;font-weight:normal;right:926.5px;text-align:right;">238,00 €</div>
<div class="t" style="top:314.12px;font-size:10px;line-height:13px;height:13px;color:#1e1e1e;font-weight:normal;left:130.00px;width:400px;text-align:center;">19%</div>
<div class="t" style="top:314.12px;font-size:10px;line-height:13px;height:13px;color:#1e1e1e;font-weight:normal;right:807px;text-align:right;">38,00 €</div>
<div class="t" style="top:314.12px;font-size:10px;line-height:13px;height:13px;color:#1e1e1e;font-weight:normal;right:744.5px;text-align:right;">200,00 €</div>
<div class="t" style="top:314.12px;font-size:10px;line-height:13px;height:13px;color:#1e1e1e;font-weight:normal;left:484.5px;">Hotelrechnung für Kundentermin / Projekt 1 Umsetzung</div>
<div class="t" style="top:314.12px;font-size:10px;line-height:13px;height:13px;color:#1e1e1e;font-weight:normal;left:805px;">Übernachtungs- und Reisenebenkosten bei Geschäftsreisen</div>
<div class="t" style="top:314.12px;font-size:10px;line-height:13px;height:13px;color:#1e1e1e;font-weight:normal;left:1163px;clip-path:inset(0 calc(100% - 38px) 0 0);">Übernachtungskosten</div>
<div class="t" style="top:328.37px;font-size:10px;line-height:13px;height:13px;color:#1e1e1e;font-weight:normal;left:-75.50px;width:400px;text-align:center;">01.04.2018</div>
<div class="t" style="top:328.37px;font-size:10px;line-height:13px;height:13px;color:#1e1e1e;font-weight:normal;left:-4.00px;width:400px;text-align:center;">4</div>
<div class="t" style="top:328.37px;font-size:10px;line-height:13px;height:13px;color:#1e1e1e;font-weight:normal;right:926.5px;text-align:right;">119,00 €</div>
<div class="t" style="top:328.37px;font-size:10px;line-height:13px;height:13px;color:#1e1e1e;font-weight:normal;left:130.00px;width:400px;text-align:center;">19%</div>
<div class="t" style="top:328.37px;font-size:10px;line-height:13px;height:13px;color:#1e1e1e;font-weight:normal;right:807px;text-align:right;">19,00 €</div>
<div class="t" style="top:328.37px;font-size:10px;line-height:13px;height:13px;color:#1e1e1e;font-weight:normal;right:744.5px;text-align:right;">100,00 €</div>
<div class="t" style="top:328.37px;font-size:10px;line-height:13px;height:13px;color:#1e1e1e;font-weight:normal;left:484.5px;">Mobilfunk</div>
<div class="t" style="top:328.37px;font-size:10px;line-height:13px;height:13px;color:#1e1e1e;font-weight:normal;left:805px;">Telekommunikationskosten</div>
<div class="t" style="top:328.37px;font-size:10px;line-height:13px;height:13px;color:#1e1e1e;font-weight:normal;left:1163px;clip-path:inset(0 calc(100% - 38px) 0 0);">Telekommunikation</div>
<div class="t" style="top:342.63px;font-size:10px;line-height:13px;height:13px;color:#1e1e1e;font-weight:normal;left:-75.50px;width:400px;text-align:center;">01.04.2018</div>
<div class="t" style="top:342.63px;font-size:10px;line-height:13px;height:13px;color:#1e1e1e;font-weight:normal;left:-4.00px;width:400px;text-align:center;">4</div>
<div class="t" style="top:342.63px;font-size:10px;line-height:13px;height:13px;color:#1e1e1e;font-weight:normal;right:926.5px;text-align:right;">59,50 €</div>
<div class="t" style="top:342.63px;font-size:10px;line-height:13px;height:13px;color:#1e1e1e;font-weight:normal;left:130.00px;width:400px;text-align:center;">19%</div>
<div class="t" style="top:342.63px;font-size:10px;line-height:13px;height:13px;color:#1e1e1e;font-weight:normal;right:807px;text-align:right;">9,50 €</div>
<div class="t" style="top:342.63px;font-size:10px;line-height:13px;height:13px;color:#1e1e1e;font-weight:normal;right:744.5px;text-align:right;">50,00 €</div>
<div class="t" style="top:342.63px;font-size:10px;line-height:13px;height:13px;color:#1e1e1e;font-weight:normal;left:484.5px;">Festnetz / Internet</div>
<div class="t" style="top:342.63px;font-size:10px;line-height:13px;height:13px;color:#1e1e1e;font-weight:normal;left:805px;">Telekommunikationskosten</div>
<div class="t" style="top:342.63px;font-size:10px;line-height:13px;height:13px;color:#1e1e1e;font-weight:normal;left:1163px;clip-path:inset(0 calc(100% - 38px) 0 0);">Telekommunikation</div>
<div class="t" style="top:356.88px;font-size:10px;line-height:13px;height:13px;color:#1e1e1e;font-weight:normal;left:-75.50px;width:400px;text-align:center;">01.07.2018</div>
<div class="t" style="top:356.88px;font-size:10px;line-height:13px;height:13px;color:#1e1e1e;font-weight:normal;left:-4.00px;width:400px;text-align:center;">7</div>
<div class="t" style="top:356.88px;font-size:10px;line-height:13px;height:13px;color:#1e1e1e;font-weight:normal;right:926.5px;text-align:right;">35,70 €</div>
<div class="t" style="top:356.88px;font-size:10px;line-height:13px;height:13px;color:#1e1e1e;font-weight:normal;left:130.00px;width:400px;text-align:center;">19%</div>
<div class="t" style="top:356.88px;font-size:10px;line-height:13px;height:13px;color:#1e1e1e;font-weight:normal;right:807px;text-align:right;">5,70 €</div>
<div class="t" style="top:356.88px;font-size:10px;line-height:13px;height:13px;color:#1e1e1e;font-weight:normal;right:744.5px;text-align:right;">30,00 €</div>
<div class="t" style="top:356.88px;font-size:10px;line-height:13px;height:13px;color:#1e1e1e;font-weight:normal;left:484.5px;">Schreibtischlampe</div>
<div class="t" style="top:356.88px;font-size:10px;line-height:13px;height:13px;color:#1e1e1e;font-weight:normal;left:805px;">übrige, unbeschränkt abziehbare Betriebsausgaben</div>
<div class="t" style="top:356.88px;font-size:10px;line-height:13px;height:13px;color:#1e1e1e;font-weight:normal;left:1163px;clip-path:inset(0 calc(100% - 38px) 0 0);">übrige Betriebsausgaben</div>
<div class="t" style="top:371.14px;font-size:10px;line-height:13px;height:13px;color:#1e1e1e;font-weight:normal;left:-75.50px;width:400px;text-align:center;">01.08.2018</div>
<div class="t" style="top:371.14px;font-size:10px;line-height:13px;height:13px;color:#1e1e1e;font-weight:normal;left:-4.00px;width:400px;text-align:center;">8</div>
<div class="t" style="top:371.14px;font-size:10px;line-height:13px;height:13px;color:#1e1e1e;font-weight:normal;right:926.5px;text-align:right;">476,00 €</div>
<div class="t" style="top:371.14px;font-size:10px;line-height:13px;height:13px;color:#1e1e1e;font-weight:normal;left:130.00px;width:400px;text-align:center;">19%</div>
<div class="t" style="top:371.14px;font-size:10px;line-height:13px;height:13px;color:#1e1e1e;font-weight:normal;right:807px;text-align:right;">76,00 €</div>
<div class="t" style="top:371.14px;font-size:10px;line-height:13px;height:13px;color:#1e1e1e;font-weight:normal;right:744.5px;text-align:right;">400,00 €</div>
<div class="t" style="top:371.14px;font-size:10px;line-height:13px;height:13px;color:#1e1e1e;font-weight:normal;left:484.5px;">Kopiergeräte - Variante 2</div>
<div class="t" style="top:371.14px;font-size:10px;line-height:13px;height:13px;color:#1e1e1e;font-weight:normal;left:805px;">Geringwertige Wirtschaftsgüter (GWG)</div>
<div class="t" style="top:371.14px;font-size:10px;line-height:13px;height:13px;color:#1e1e1e;font-weight:normal;left:1163px;clip-path:inset(0 calc(100% - 38px) 0 0);">Geringwertige</div>
<div class="t" style="top:385.39px;font-size:10px;line-height:13px;height:13px;color:#1e1e1e;font-weight:normal;left:-75.50px;width:400px;text-align:center;">01.10.2018</div>
<div class="t" style="top:385.39px;font-size:10px;line-height:13px;height:13px;color:#1e1e1e;font-weight:normal;left:-4.00px;width:400px;text-align:center;">10</div>
<div class="t" style="top:385.39px;font-size:10px;line-height:13px;height:13px;color:#1e1e1e;font-weight:normal;right:926.5px;text-align:right;">357,00 €</div>
<div class="t" style="top:385.39px;font-size:10px;line-height:13px;height:13px;color:#1e1e1e;font-weight:normal;left:130.00px;width:400px;text-align:center;">19%</div>
<div class="t" style="top:385.39px;font-size:10px;line-height:13px;height:13px;color:#1e1e1e;font-weight:normal;right:807px;text-align:right;">57,00 €</div>
<div class="t" style="top:385.39px;font-size:10px;line-height:13px;height:13px;color:#1e1e1e;font-weight:normal;right:744.5px;text-align:right;">300,00 €</div>
<div class="t" style="top:385.39px;font-size:10px;line-height:13px;height:13px;color:#1e1e1e;font-weight:normal;left:484.5px;">Seminarkosten &quot;Denken wie ein Unternehmer&quot;</div>
<div class="t" style="top:385.39px;font-size:10px;line-height:13px;height:13px;color:#1e1e1e;font-weight:normal;left:805px;">Fortbildungskosten (ohne Reisekosten)</div>
<div class="t" style="top:385.39px;font-size:10px;line-height:13px;height:13px;color:#1e1e1e;font-weight:normal;left:1163px;clip-path:inset(0 calc(100% - 38px) 0 0);">Fortbildungskosten</div>
<div class="t" style="top:399.65px;font-size:10px;line-height:13px;height:13px;color:#1e1e1e;font-weight:normal;left:-75.50px;width:400px;text-align:center;">20.10.2018</div>
<div class="t" style="top:399.65px;font-size:10px;line-height:13px;height:13px;color:#1e1e1e;font-weight:normal;left:-4.00px;width:400px;text-align:center;">10</div>
<div class="t" style="top:399.65px;font-size:10px;line-height:13px;height:13px;color:#1e1e1e;font-weight:normal;right:926.5px;text-align:right;">150,00 €</div>
<div class="t" style="top:399.65px;font-size:10px;line-height:13px;height:13px;color:#1e1e1e;font-weight:normal;left:130.00px;width:400px;text-align:center;">0%</div>
<div class="t" style="top:399.65px;font-size:10px;line-height:13px;height:13px;color:#1e1e1e;font-weight:normal;right:825px;text-align:right;">-</div>
<div class="t" style="top:399.65px;font-size:10px;line-height:13px;height:13px;color:#1e1e1e;font-weight:normal;right:807px;text-align:right;">€</div>
<div class="t" style="top:399.65px;font-size:10px;line-height:13px;height:13px;color:#1e1e1e;font-weight:normal;right:744.5px;text-align:right;">150,00 €</div>
<div class="t" style="top:399.65px;font-size:10px;line-height:13px;height:13px;color:#1e1e1e;font-weight:normal;left:484.5px;">Zugticket Leipzig-Wien</div>
<div class="t" style="top:399.65px;font-size:10px;line-height:13px;height:13px;color:#1e1e1e;font-weight:normal;left:805px;">Sonstige tatsächliche Fahrtkosten</div>
<div class="t" style="top:399.65px;font-size:10px;line-height:13px;height:13px;color:#1e1e1e;font-weight:normal;left:1163px;clip-path:inset(0 calc(100% - 38px) 0 0);">Fahrtkosten</div>
<div class="t" style="top:413.91px;font-size:10px;line-height:13px;height:13px;color:#1e1e1e;font-weight:normal;left:-75.50px;width:400px;text-align:center;">27.10.2018</div>
<div class="t" style="top:413.91px;font-size:10px;line-height:13px;height:13px;color:#1e1e1e;font-weight:normal;left:-4.00px;width:400px;text-align:center;">10</div>
<div class="t" style="top:413.91px;font-size:10px;line-height:13px;height:13px;color:#1e1e1e;font-weight:normal;right:926.5px;text-align:right;">119,00 €</div>
<div class="t" style="top:413.91px;font-size:10px;line-height:13px;height:13px;color:#1e1e1e;font-weight:normal;left:130.00px;width:400px;text-align:center;">19%</div>
<div class="t" style="top:413.91px;font-size:10px;line-height:13px;height:13px;color:#1e1e1e;font-weight:normal;right:807px;text-align:right;">19,00 €</div>
<div class="t" style="top:413.91px;font-size:10px;line-height:13px;height:13px;color:#1e1e1e;font-weight:normal;right:744.5px;text-align:right;">100,00 €</div>
<div class="t" style="top:413.91px;font-size:10px;line-height:13px;height:13px;color:#1e1e1e;font-weight:normal;left:484.5px;">Leihwagen / Wien - Erfurt</div>
<div class="t" style="top:413.91px;font-size:10px;line-height:13px;height:13px;color:#1e1e1e;font-weight:normal;left:805px;">Sonstige tatsächliche Fahrtkosten</div>
<div class="t" style="top:413.91px;font-size:10px;line-height:13px;height:13px;color:#1e1e1e;font-weight:normal;left:1163px;clip-path:inset(0 calc(100% - 38px) 0 0);">Fahrtkosten</div>
<div class="t" style="top:428.16px;font-size:10px;line-height:13px;height:13px;color:#1e1e1e;font-weight:normal;left:-75.50px;width:400px;text-align:center;">01.11.2018</div>
<div class="t" style="top:428.16px;font-size:10px;line-height:13px;height:13px;color:#1e1e1e;font-weight:normal;left:-4.00px;width:400px;text-align:center;">11</div>
<div class="t" style="top:428.16px;font-size:10px;line-height:13px;height:13px;color:#1e1e1e;font-weight:normal;right:926.5px;text-align:right;">595,00 €</div>
<div class="t" style="top:428.16px;font-size:10px;line-height:13px;height:13px;color:#1e1e1e;font-weight:normal;left:130.00px;width:400px;text-align:center;">19%</div>
<div class="t" style="top:428.16px;font-size:10px;line-height:13px;height:13px;color:#1e1e1e;font-weight:normal;right:807px;text-align:right;">95,00 €</div>
<div class="t" style="top:428.16px;font-size:10px;line-height:13px;height:13px;color:#1e1e1e;font-weight:normal;right:744.5px;text-align:right;">500,00 €</div>
<div class="t" style="top:428.16px;font-size:10px;line-height:13px;height:13px;color:#1e1e1e;font-weight:normal;left:484.5px;">Einkauf Software für IT-Schulung / 5 Lizenzen</div>
<div class="t" style="top:428.16px;font-size:10px;line-height:13px;height:13px;color:#1e1e1e;font-weight:normal;left:805px;">Waren, Rohstoffe, Hilfsstoffe</div>
<div class="t" style="top:428.16px;font-size:10px;line-height:13px;height:13px;color:#1e1e1e;font-weight:normal;left:1163px;clip-path:inset(0 calc(100% - 38px) 0 0);">Waren, Rohstoffe</div>
<div class="t" style="top:442.42px;font-size:10px;line-height:13px;height:13px;color:#1e1e1e;font-weight:normal;left:-75.50px;width:400px;text-align:center;">15.12.2018</div>
<div class="t" style="top:442.42px;font-size:10px;line-height:13px;height:13px;color:#1e1e1e;font-weight:normal;left:-4.00px;width:400px;text-align:center;">12</div>
<div class="t" style="top:442.42px;font-size:10px;line-height:13px;height:13px;color:#1e1e1e;font-weight:normal;right:926.5px;text-align:right;">1.000,00 €</div>
<div class="t" style="top:442.42px;font-size:10px;line-height:13px;height:13px;color:#1e1e1e;font-weight:normal;left:130.00px;width:400px;text-align:center;">0%</div>
<div class="t" style="top:442.42px;font-size:10px;line-height:13px;height:13px;color:#1e1e1e;font-weight:normal;right:825px;text-align:right;">-</div>
<div class="t" style="top:442.42px;font-size:10px;line-height:13px;height:13px;color:#1e1e1e;font-weight:normal;right:807px;text-align:right;">€</div>
<div class="t" style="top:442.42px;font-size:10px;line-height:13px;height:13px;color:#1e1e1e;font-weight:normal;right:744.5px;text-align:right;">1.000,00 €</div>
<div class="t" style="top:442.42px;font-size:10px;line-height:13px;height:13px;color:#1e1e1e;font-weight:normal;left:484.5px;">Lohn Dezember Herr Mustermann</div>
<div class="t" style="top:442.42px;font-size:10px;line-height:13px;height:13px;color:#1e1e1e;font-weight:normal;left:805px;">Personalkosten</div>
<div class="t" style="top:442.42px;font-size:10px;line-height:13px;height:13px;color:#1e1e1e;font-weight:normal;left:1163px;clip-path:inset(0 calc(100% - 38px) 0 0);">Personalkosten</div>
<div class="t" style="top:456.68px;font-size:10px;line-height:13px;height:13px;color:#1e1e1e;font-weight:normal;left:-75.50px;width:400px;text-align:center;">15.12.2018</div>
<div class="t" style="top:456.68px;font-size:10px;line-height:13px;height:13px;color:#1e1e1e;font-weight:normal;left:-4.00px;width:400px;text-align:center;">12</div>
<div class="t" style="top:456.68px;font-size:10px;line-height:13px;height:13px;color:#1e1e1e;font-weight:normal;right:926.5px;text-align:right;">595,00 €</div>
<div class="t" style="top:456.68px;font-size:10px;line-height:13px;height:13px;color:#1e1e1e;font-weight:normal;left:130.00px;width:400px;text-align:center;">19%</div>
<div class="t" style="top:456.68px;font-size:10px;line-height:13px;height:13px;color:#1e1e1e;font-weight:normal;right:807px;text-align:right;">95,00 €</div>
<div class="t" style="top:456.68px;font-size:10px;line-height:13px;height:13px;color:#1e1e1e;font-weight:normal;right:744.5px;text-align:right;">500,00 €</div>
<div class="t" style="top:456.68px;font-size:10px;line-height:13px;height:13px;color:#1e1e1e;font-weight:normal;left:484.5px;">Büromiete</div>
<div class="t" style="top:456.68px;font-size:10px;line-height:13px;height:13px;color:#1e1e1e;font-weight:normal;left:805px;">Raumkosten - Miete / Pacht für Geschäftsräume &amp; betriebl. genutzte Grundst.</div>
<div class="t" style="top:456.68px;font-size:10px;line-height:13px;height:13px;color:#1e1e1e;font-weight:normal;left:1163px;clip-path:inset(0 calc(100% - 38px) 0 0);">Raumkosten</div>
<div class="t" style="top:470.93px;font-size:10px;line-height:13px;height:13px;color:#1e1e1e;font-weight:normal;left:-75.50px;width:400px;text-align:center;">15.12.2018</div>
<div class="t" style="top:470.93px;font-size:10px;line-height:13px;height:13px;color:#1e1e1e;font-weight:normal;left:-4.00px;width:400px;text-align:center;">12</div>
<div class="t" style="top:470.93px;font-size:10px;line-height:13px;height:13px;color:#1e1e1e;font-weight:normal;right:926.5px;text-align:right;">476,00 €</div>
<div class="t" style="top:470.93px;font-size:10px;line-height:13px;height:13px;color:#1e1e1e;font-weight:normal;left:130.00px;width:400px;text-align:center;">19%</div>
<div class="t" style="top:470.93px;font-size:10px;line-height:13px;height:13px;color:#1e1e1e;font-weight:normal;right:807px;text-align:right;">76,00 €</div>
<div class="t" style="top:470.93px;font-size:10px;line-height:13px;height:13px;color:#1e1e1e;font-weight:normal;right:744.5px;text-align:right;">400,00 €</div>
<div class="t" style="top:470.93px;font-size:10px;line-height:13px;height:13px;color:#1e1e1e;font-weight:normal;left:484.5px;">Rechtsberatung Notar Dr. Recht</div>
<div class="t" style="top:470.93px;font-size:10px;line-height:13px;height:13px;color:#1e1e1e;font-weight:normal;left:805px;">Rechts- &amp; Steuerberatung, Buchführung</div>
<div class="t" style="top:470.93px;font-size:10px;line-height:13px;height:13px;color:#1e1e1e;font-weight:normal;left:1163px;clip-path:inset(0 calc(100% - 38px) 0 0);">Rechts- &amp; Steuer</div>
<div class="t" style="top:485.19px;font-size:10px;line-height:13px;height:13px;color:#1e1e1e;font-weight:normal;left:-75.50px;width:400px;text-align:center;">15.12.2018</div>
<div class="t" style="top:485.19px;font-size:10px;line-height:13px;height:13px;color:#1e1e1e;font-weight:normal;left:-4.00px;width:400px;text-align:center;">12</div>
<div class="t" style="top:485.19px;font-size:10px;line-height:13px;height:13px;color:#1e1e1e;font-weight:normal;right:926.5px;text-align:right;">300,00 €</div>
<div class="t" style="top:485.19px;font-size:10px;line-height:13px;height:13px;color:#1e1e1e;font-weight:normal;left:130.00px;width:400px;text-align:center;">0%</div>
<div class="t" style="top:485.19px;font-size:10px;line-height:13px;height:13px;color:#1e1e1e;font-weight:normal;right:825px;text-align:right;">-</div>
<div class="t" style="top:485.19px;font-size:10px;line-height:13px;height:13px;color:#1e1e1e;font-weight:normal;right:807px;text-align:right;">€</div>
<div class="t" style="top:485.19px;font-size:10px;line-height:13px;height:13px;color:#1e1e1e;font-weight:normal;right:744.5px;text-align:right;">300,00 €</div>
<div class="t" style="top:485.19px;font-size:10px;line-height:13px;height:13px;color:#1e1e1e;font-weight:normal;left:484.5px;">Betriebshaftpflichtversicherung</div>
<div class="t" style="top:485.19px;font-size:10px;line-height:13px;height:13px;color:#1e1e1e;font-weight:normal;left:805px;">Beiträge, Gebühren, Abgaben, Versich. (ohne Gebäude und Kfz)</div>
<div class="t" style="top:485.19px;font-size:10px;line-height:13px;height:13px;color:#1e1e1e;font-weight:normal;left:1163px;clip-path:inset(0 calc(100% - 38px) 0 0);">Beiträge</div>
<div class="t" style="top:499.44px;font-size:10px;line-height:13px;height:13px;color:#1e1e1e;font-weight:normal;left:-75.50px;width:400px;text-align:center;">15.12.2018</div>
<div class="t" style="top:499.44px;font-size:10px;line-height:13px;height:13px;color:#1e1e1e;font-weight:normal;left:-4.00px;width:400px;text-align:center;">12</div>
<div class="t" style="top:499.44px;font-size:10px;line-height:13px;height:13px;color:#1e1e1e;font-weight:normal;right:926.5px;text-align:right;">357,00 €</div>
<div class="t" style="top:499.44px;font-size:10px;line-height:13px;height:13px;color:#1e1e1e;font-weight:normal;left:130.00px;width:400px;text-align:center;">19%</div>
<div class="t" style="top:499.44px;font-size:10px;line-height:13px;height:13px;color:#1e1e1e;font-weight:normal;right:807px;text-align:right;">57,00 €</div>
<div class="t" style="top:499.44px;font-size:10px;line-height:13px;height:13px;color:#1e1e1e;font-weight:normal;right:744.5px;text-align:right;">300,00 €</div>
<div class="t" style="top:499.44px;font-size:10px;line-height:13px;height:13px;color:#1e1e1e;font-weight:normal;left:484.5px;">Design + Druck Visitenkarten</div>
<div class="t" style="top:499.44px;font-size:10px;line-height:13px;height:13px;color:#1e1e1e;font-weight:normal;left:805px;">Werbekosten</div>
<div class="t" style="top:499.44px;font-size:10px;line-height:13px;height:13px;color:#1e1e1e;font-weight:normal;left:1163px;clip-path:inset(0 calc(100% - 38px) 0 0);">Werbekosten</div>
<div class="t" style="top:513.70px;font-size:10px;line-height:13px;height:13px;color:#1e1e1e;font-weight:normal;left:-75.50px;width:400px;text-align:center;">15.12.2018</div>
<div class="t" style="top:513.70px;font-size:10px;line-height:13px;height:13px;color:#1e1e1e;font-weight:normal;left:-4.00px;width:400px;text-align:center;">12</div>
<div class="t" style="top:513.70px;font-size:10px;line-height:13px;height:13px;color:#1e1e1e;font-weight:normal;right:926.5px;text-align:right;">59,50 €</div>
<div class="t" style="top:513.70px;font-size:10px;line-height:13px;height:13px;color:#1e1e1e;font-weight:normal;left:130.00px;width:400px;text-align:center;">19%</div>
<div class="t" style="top:513.70px;font-size:10px;line-height:13px;height:13px;color:#1e1e1e;font-weight:normal;right:807px;text-align:right;">9,50 €</div>
<div class="t" style="top:513.70px;font-size:10px;line-height:13px;height:13px;color:#1e1e1e;font-weight:normal;right:744.5px;text-align:right;">50,00 €</div>
<div class="t" style="top:513.70px;font-size:10px;line-height:13px;height:13px;color:#1e1e1e;font-weight:normal;left:484.5px;">Leasing Beamer</div>
<div class="t" style="top:513.70px;font-size:10px;line-height:13px;height:13px;color:#1e1e1e;font-weight:normal;left:805px;">Miete / Leasing für bewegliche Wirtschaftsgüter (ohne Kfz)</div>
<div class="t" style="top:513.70px;font-size:10px;line-height:13px;height:13px;color:#1e1e1e;font-weight:normal;left:1163px;clip-path:inset(0 calc(100% - 38px) 0 0);">Miete / Leasing</div>
<div class="t" style="top:527.96px;font-size:10px;line-height:13px;height:13px;color:#1e1e1e;font-weight:normal;left:-75.50px;width:400px;text-align:center;">15.12.2018</div>
<div class="t" style="top:527.96px;font-size:10px;line-height:13px;height:13px;color:#1e1e1e;font-weight:normal;left:-4.00px;width:400px;text-align:center;">12</div>
<div class="t" style="top:527.96px;font-size:10px;line-height:13px;height:13px;color:#1e1e1e;font-weight:normal;right:926.5px;text-align:right;">2,00 €</div>
<div class="t" style="top:527.96px;font-size:10px;line-height:13px;height:13px;color:#1e1e1e;font-weight:normal;left:130.00px;width:400px;text-align:center;">0%</div>
<div class="t" style="top:527.96px;font-size:10px;line-height:13px;height:13px;color:#1e1e1e;font-weight:normal;right:825px;text-align:right;">-</div>
<div class="t" style="top:527.96px;font-size:10px;line-height:13px;height:13px;color:#1e1e1e;font-weight:normal;right:807px;text-align:right;">€</div>
<div class="t" style="top:527.96px;font-size:10px;line-height:13px;height:13px;color:#1e1e1e;font-weight:normal;right:744.5px;text-align:right;">2,00 €</div>
<div class="t" style="top:527.96px;font-size:10px;line-height:13px;height:13px;color:#1e1e1e;font-weight:normal;left:484.5px;">Kontoführungsgebühren</div>
<div class="t" style="top:527.96px;font-size:10px;line-height:13px;height:13px;color:#1e1e1e;font-weight:normal;left:805px;">übrige, unbeschränkt abziehbare Betriebsausgaben</div>
<div class="t" style="top:527.96px;font-size:10px;line-height:13px;height:13px;color:#1e1e1e;font-weight:normal;left:1163px;clip-path:inset(0 calc(100% - 38px) 0 0);">übrige Betriebsausgaben</div>
<div class="t" style="top:542.21px;font-size:10px;line-height:13px;height:13px;color:#1e1e1e;font-weight:normal;left:-4.00px;width:400px;text-align:center;">0</div>
<div class="t" style="top:542.21px;font-size:10px;line-height:13px;height:13px;color:#1e1e1e;font-weight:normal;right:825px;text-align:right;">-</div>
<div class="t" style="top:542.21px;font-size:10px;line-height:13px;height:13px;color:#1e1e1e;font-weight:normal;right:807px;text-align:right;">€</div>
<div class="t" style="top:542.21px;font-size:10px;line-height:13px;height:13px;color:#1e1e1e;font-weight:normal;right:762.5px;text-align:right;">-</div>
<div class="t" style="top:542.21px;font-size:10px;line-height:13px;height:13px;color:#1e1e1e;font-weight:normal;right:744.5px;text-align:right;">€</div>
<div class="t" style="top:556.47px;font-size:10px;line-height:13px;height:13px;color:#1e1e1e;font-weight:normal;left:-4.00px;width:400px;text-align:center;">0</div>
<div class="t" style="top:556.47px;font-size:10px;line-height:13px;height:13px;color:#1e1e1e;font-weight:normal;right:825px;text-align:right;">-</div>
<div class="t" style="top:556.47px;font-size:10px;line-height:13px;height:13px;color:#1e1e1e;font-weight:normal;right:807px;text-align:right;">€</div>
<div class="t" style="top:556.47px;font-size:10px;line-height:13px;height:13px;color:#1e1e1e;font-weight:normal;right:762.5px;text-align:right;">-</div>
<div class="t" style="top:556.47px;font-size:10px;line-height:13px;height:13px;color:#1e1e1e;font-weight:normal;right:744.5px;text-align:right;">€</div>
<div class="t" style="top:570.72px;font-size:10px;line-height:13px;height:13px;color:#1e1e1e;font-weight:normal;left:-4.00px;width:400px;text-align:center;">0</div>
<div class="t" style="top:570.72px;font-size:10px;line-height:13px;height:13px;color:#1e1e1e;font-weight:normal;right:825px;text-align:right;">-</div>
<div class="t" style="top:570.72px;font-size:10px;line-height:13px;height:13px;color:#1e1e1e;font-weight:normal;right:807px;text-align:right;">€</div>
<div class="t" style="top:570.72px;font-size:10px;line-height:13px;height:13px;color:#1e1e1e;font-weight:normal;right:762.5px;text-align:right;">-</div>
<div class="t" style="top:570.72px;font-size:10px;line-height:13px;height:13px;color:#1e1e1e;font-weight:normal;right:744.5px;text-align:right;">€</div>
<div class="t" style="top:584.98px;font-size:10px;line-height:13px;height:13px;color:#1e1e1e;font-weight:normal;left:-4.00px;width:400px;text-align:center;">0</div>
<div class="t" style="top:584.98px;font-size:10px;line-height:13px;height:13px;color:#1e1e1e;font-weight:normal;right:825px;text-align:right;">-</div>
<div class="t" style="top:584.98px;font-size:10px;line-height:13px;height:13px;color:#1e1e1e;font-weight:normal;right:807px;text-align:right;">€</div>
<div class="t" style="top:584.98px;font-size:10px;line-height:13px;height:13px;color:#1e1e1e;font-weight:normal;right:762.5px;text-align:right;">-</div>
<div class="t" style="top:584.98px;font-size:10px;line-height:13px;height:13px;color:#1e1e1e;font-weight:normal;right:744.5px;text-align:right;">€</div>
<div class="t" style="top:599.24px;font-size:10px;line-height:13px;height:13px;color:#1e1e1e;font-weight:normal;left:-4.00px;width:400px;text-align:center;">0</div>
<div class="t" style="top:599.24px;font-size:10px;line-height:13px;height:13px;color:#1e1e1e;font-weight:normal;right:825px;text-align:right;">-</div>
<div class="t" style="top:599.24px;font-size:10px;line-height:13px;height:13px;color:#1e1e1e;font-weight:normal;right:807px;text-align:right;">€</div>
<div class="t" style="top:599.24px;font-size:10px;line-height:13px;height:13px;color:#1e1e1e;font-weight:normal;right:762.5px;text-align:right;">-</div>
<div class="t" style="top:599.24px;font-size:10px;line-height:13px;height:13px;color:#1e1e1e;font-weight:normal;right:744.5px;text-align:right;">€</div>
<div class="t" style="top:613.49px;font-size:10px;line-height:13px;height:13px;color:#1e1e1e;font-weight:normal;left:-4.00px;width:400px;text-align:center;">0</div>
<div class="t" style="top:613.49px;font-size:10px;line-height:13px;height:13px;color:#1e1e1e;font-weight:normal;right:825px;text-align:right;">-</div>
<div class="t" style="top:613.49px;font-size:10px;line-height:13px;height:13px;color:#1e1e1e;font-weight:normal;right:807px;text-align:right;">€</div>
<div class="t" style="top:613.49px;font-size:10px;line-height:13px;height:13px;color:#1e1e1e;font-weight:normal;right:762.5px;text-align:right;">-</div>
<div class="t" style="top:613.49px;font-size:10px;line-height:13px;height:13px;color:#1e1e1e;font-weight:normal;right:744.5px;text-align:right;">€</div>
<div class="t" style="top:627.75px;font-size:10px;line-height:13px;height:13px;color:#1e1e1e;font-weight:normal;left:-4.00px;width:400px;text-align:center;">0</div>
<div class="t" style="top:627.75px;font-size:10px;line-height:13px;height:13px;color:#1e1e1e;font-weight:normal;right:825px;text-align:right;">-</div>
<div class="t" style="top:627.75px;font-size:10px;line-height:13px;height:13px;color:#1e1e1e;font-weight:normal;right:807px;text-align:right;">€</div>
<div class="t" style="top:627.75px;font-size:10px;line-height:13px;height:13px;color:#1e1e1e;font-weight:normal;right:762.5px;text-align:right;">-</div>
<div class="t" style="top:627.75px;font-size:10px;line-height:13px;height:13px;color:#1e1e1e;font-weight:normal;right:744.5px;text-align:right;">€</div>
<div class="t" style="top:642.00px;font-size:10px;line-height:13px;height:13px;color:#1e1e1e;font-weight:normal;left:-4.00px;width:400px;text-align:center;">0</div>
<div class="t" style="top:642.00px;font-size:10px;line-height:13px;height:13px;color:#1e1e1e;font-weight:normal;right:825px;text-align:right;">-</div>
<div class="t" style="top:642.00px;font-size:10px;line-height:13px;height:13px;color:#1e1e1e;font-weight:normal;right:807px;text-align:right;">€</div>
<div class="t" style="top:642.00px;font-size:10px;line-height:13px;height:13px;color:#1e1e1e;font-weight:normal;right:762.5px;text-align:right;">-</div>
<div class="t" style="top:642.00px;font-size:10px;line-height:13px;height:13px;color:#1e1e1e;font-weight:normal;right:744.5px;text-align:right;">€</div>
<div class="t" style="top:656.26px;font-size:10px;line-height:13px;height:13px;color:#1e1e1e;font-weight:normal;left:-4.00px;width:400px;text-align:center;">0</div>
<div class="t" style="top:656.26px;font-size:10px;line-height:13px;height:13px;color:#1e1e1e;font-weight:normal;right:825px;text-align:right;">-</div>
<div class="t" style="top:656.26px;font-size:10px;line-height:13px;height:13px;color:#1e1e1e;font-weight:normal;right:807px;text-align:right;">€</div>
<div class="t" style="top:656.26px;font-size:10px;line-height:13px;height:13px;color:#1e1e1e;font-weight:normal;right:762.5px;text-align:right;">-</div>
<div class="t" style="top:656.26px;font-size:10px;line-height:13px;height:13px;color:#1e1e1e;font-weight:normal;right:744.5px;text-align:right;">€</div>
<div class="t" style="top:670.51px;font-size:10px;line-height:13px;height:13px;color:#1e1e1e;font-weight:normal;left:-4.00px;width:400px;text-align:center;">0</div>
<div class="t" style="top:670.51px;font-size:10px;line-height:13px;height:13px;color:#1e1e1e;font-weight:normal;right:825px;text-align:right;">-</div>
<div class="t" style="top:670.51px;font-size:10px;line-height:13px;height:13px;color:#1e1e1e;font-weight:normal;right:807px;text-align:right;">€</div>
<div class="t" style="top:670.51px;font-size:10px;line-height:13px;height:13px;color:#1e1e1e;font-weight:normal;right:762.5px;text-align:right;">-</div>
<div class="t" style="top:670.51px;font-size:10px;line-height:13px;height:13px;color:#1e1e1e;font-weight:normal;right:744.5px;text-align:right;">€</div>
<div class="t" style="top:684.77px;font-size:10px;line-height:13px;height:13px;color:#1e1e1e;font-weight:normal;left:-4.00px;width:400px;text-align:center;">0</div>
<div class="t" style="top:684.77px;font-size:10px;line-height:13px;height:13px;color:#1e1e1e;font-weight:normal;right:825px;text-align:right;">-</div>
<div class="t" style="top:684.77px;font-size:10px;line-height:13px;height:13px;color:#1e1e1e;font-weight:normal;right:807px;text-align:right;">€</div>
<div class="t" style="top:684.77px;font-size:10px;line-height:13px;height:13px;color:#1e1e1e;font-weight:normal;right:762.5px;text-align:right;">-</div>
<div class="t" style="top:684.77px;font-size:10px;line-height:13px;height:13px;color:#1e1e1e;font-weight:normal;right:744.5px;text-align:right;">€</div>
<div class="t" style="top:699.03px;font-size:10px;line-height:13px;height:13px;color:#1e1e1e;font-weight:normal;left:-4.00px;width:400px;text-align:center;">0</div>
<div class="t" style="top:699.03px;font-size:10px;line-height:13px;height:13px;color:#1e1e1e;font-weight:normal;right:825px;text-align:right;">-</div>
<div class="t" style="top:699.03px;font-size:10px;line-height:13px;height:13px;color:#1e1e1e;font-weight:normal;right:807px;text-align:right;">€</div>
<div class="t" style="top:699.03px;font-size:10px;line-height:13px;height:13px;color:#1e1e1e;font-weight:normal;right:762.5px;text-align:right;">-</div>
<div class="t" style="top:699.03px;font-size:10px;line-height:13px;height:13px;color:#1e1e1e;font-weight:normal;right:744.5px;text-align:right;">€</div>
<div class="t" style="top:713.28px;font-size:10px;line-height:13px;height:13px;color:#1e1e1e;font-weight:normal;left:-4.00px;width:400px;text-align:center;">0</div>
<div class="t" style="top:713.28px;font-size:10px;line-height:13px;height:13px;color:#1e1e1e;font-weight:normal;right:825px;text-align:right;">-</div>
<div class="t" style="top:713.28px;font-size:10px;line-height:13px;height:13px;color:#1e1e1e;font-weight:normal;right:807px;text-align:right;">€</div>
<div class="t" style="top:713.28px;font-size:10px;line-height:13px;height:13px;color:#1e1e1e;font-weight:normal;right:762.5px;text-align:right;">-</div>
<div class="t" style="top:713.28px;font-size:10px;line-height:13px;height:13px;color:#1e1e1e;font-weight:normal;right:744.5px;text-align:right;">€</div>
<div class="t" style="top:727.54px;font-size:10px;line-height:13px;height:13px;color:#1e1e1e;font-weight:normal;left:-4.00px;width:400px;text-align:center;">0</div>
<div class="t" style="top:727.54px;font-size:10px;line-height:13px;height:13px;color:#1e1e1e;font-weight:normal;right:825px;text-align:right;">-</div>
<div class="t" style="top:727.54px;font-size:10px;line-height:13px;height:13px;color:#1e1e1e;font-weight:normal;right:807px;text-align:right;">€</div>
<div class="t" style="top:727.54px;font-size:10px;line-height:13px;height:13px;color:#1e1e1e;font-weight:normal;right:762.5px;text-align:right;">-</div>
<div class="t" style="top:727.54px;font-size:10px;line-height:13px;height:13px;color:#1e1e1e;font-weight:normal;right:744.5px;text-align:right;">€</div>
<div class="r" style="left:0;top:726px;width:1202px;height:6.3px;overflow:hidden;">
</div>
<div class="r" style="left:23px;top:211px;width:64px;height:32px;background:transparent;box-sizing:border-box;border:2px solid #217346;"></div>
<div class="r" style="left:83.5px;top:239px;width:5px;height:5px;background:#217346;box-sizing:border-box;border-left:1px solid #fff;border-top:1px solid #fff;"></div>
<div class="r" style="left:1202px;top:194px;width:19px;height:538.3px;background:#e3e3e3;"></div>
<div class="r" style="left:1205.5px;top:196px;width:13px;height:13px;background:#fff;box-sizing:border-box;border:1px solid #cfcfcf;"></div>
<svg class="r" style="left:1208px;top:200px;" width="8" height="5" viewBox="0 0 8 5"><path d="M0 4.5 L4 0 L8 4.5 Z" fill="#777"/></svg>
<div class="r" style="left:1205.5px;top:210.8px;width:13px;height:15px;background:#fff;box-sizing:border-box;border:1px solid #cfcfcf;"></div>
<div class="r" style="left:1205.5px;top:718.6px;width:13px;height:13.2px;background:#fff;box-sizing:border-box;border:1px solid #cfcfcf;"></div>
<svg class="r" style="left:1208px;top:723px;" width="8" height="5" viewBox="0 0 8 5"><path d="M0 0 L8 0 L4 4.5 Z" fill="#777"/></svg>
<div class="r" style="left:0px;top:732.3px;width:1221px;height:26.5px;background:#f0f0f0;"></div>
<div class="r" style="left:0px;top:732.3px;width:1202px;height:1.2px;background:#c6c6c6;"></div>
<svg class="r" style="left:24px;top:741px;" width="6" height="9" viewBox="0 0 6 9"><path d="M5 0 L0.5 4.5 L5 9 Z" fill="#c3c3c3"/></svg>
<svg class="r" style="left:52px;top:741px;" width="6" height="9" viewBox="0 0 6 9"><path d="M0.5 0 L5 4.5 L0.5 9 Z" fill="#217346"/></svg>
<div class="r" style="left:95px;top:736px;width:1px;height:19px;background:#c6c6c6;"></div>
<div class="r" style="left:97.8px;top:735px;width:77.2px;height:20.6px;background:#000;"></div>
<div class="t" style="top:738.02px;font-size:11.5px;line-height:15px;height:15px;color:#fff;font-weight:normal;left:-63.60px;width:400px;text-align:center;">Lies mich!</div>
<div class="r" style="left:177px;top:736px;width:1px;height:19px;background:#c6c6c6;"></div>
<div class="r" style="left:179.4px;top:735px;width:97.6px;height:20.6px;background:#000;"></div>
<div class="t" style="top:738.02px;font-size:11.5px;line-height:15px;height:15px;color:#fff;font-weight:normal;left:28.20px;width:400px;text-align:center;">Einstellungen</div>
<div class="r" style="left:279.5px;top:736px;width:1px;height:19px;background:#c6c6c6;"></div>
<div class="r" style="left:282px;top:735px;width:70.5px;height:20.6px;background:#7030a0;"></div>
<div class="t" style="top:738.02px;font-size:11.5px;line-height:15px;height:15px;color:#e8dcf0;font-weight:normal;left:117.25px;width:400px;text-align:center;">Beispiele</div>
<div class="r" style="left:354.5px;top:736px;width:1px;height:19px;background:#c6c6c6;"></div>
<div class="r" style="left:356.8px;top:735px;width:44.5px;height:20.6px;background:#ffff00;"></div>
<div class="t" style="top:738.02px;font-size:11.5px;line-height:15px;height:15px;color:#222;font-weight:normal;left:179.05px;width:400px;text-align:center;">Einn</div>
<div class="r" style="left:402.3px;top:736px;width:1px;height:19px;background:#c6c6c6;"></div>
<div class="r" style="left:403.3px;top:733px;width:52.4px;height:22.6px;background:linear-gradient(#ffffff 35%,#f6f6c4);"></div>
<div class="r" style="left:403.3px;top:754px;width:52.4px;height:2px;background:#217346;"></div>
<div class="t" style="top:738.02px;font-size:11.5px;line-height:15px;height:15px;color:#217346;font-weight:bold;left:229.50px;width:400px;text-align:center;">Ausg</div>
<div class="r" style="left:456.7px;top:736px;width:1px;height:19px;background:#c6c6c6;"></div>
<div class="r" style="left:457.7px;top:735px;width:55.900000000000034px;height:20.6px;background:#ffff00;"></div>
<div class="t" style="top:738.02px;font-size:11.5px;line-height:15px;height:15px;color:#222;font-weight:normal;left:285.65px;width:400px;text-align:center;">Bewirt</div>
<div class="r" style="left:515.3px;top:736px;width:1px;height:19px;background:#c6c6c6;"></div>
<div class="r" style="left:517px;top:735px;width:126.60000000000002px;height:20.6px;background:#ffff00;"></div>
<div class="t" style="top:738.02px;font-size:11.5px;line-height:15px;height:15px;color:#222;font-weight:normal;left:380.30px;width:400px;text-align:center;">VPMA - pausch.FK</div>
<div class="r" style="left:645.8px;top:736px;width:1px;height:19px;background:#c6c6c6;"></div>
<div class="r" style="left:648px;top:735px;width:106.79999999999995px;height:20.6px;background:#ffff00;"></div>
<div class="t" style="top:738.02px;font-size:11.5px;line-height:15px;height:15px;color:#222;font-weight:normal;left:501.40px;width:400px;text-align:center;">GWG-Sammelp</div>
<div class="r" style="left:756.9px;top:736px;width:1px;height:19px;background:#c6c6c6;"></div>
<div class="r" style="left:759px;top:735px;width:88px;height:20.6px;background:#ffff00;"></div>
<div class="t" style="top:738.02px;font-size:11.5px;line-height:15px;height:15px;color:#222;font-weight:normal;left:603.00px;width:400px;text-align:center;">Anlageverm</div>
<div class="r" style="left:849.5px;top:736px;width:1px;height:19px;background:#c6c6c6;"></div>
<div class="r" style="left:852px;top:735px;width:16px;height:20.6px;background:#ffff00;"></div>
<div class="r" style="left:852px;top:735px;width:16px;height:21px;overflow:hidden;">
<div class="t" style="top:3.02px;font-size:11.5px;line-height:15px;height:15px;color:#222;font-weight:normal;left:10px;">G</div>
</div>
<div class="t" style="top:736.84px;font-size:12px;line-height:16px;height:16px;color:#217346;font-weight:bold;left:680.80px;width:400px;text-align:center;">...</div>
<svg class="r" style="left:898px;top:737px;" width="17" height="17" viewBox="0 0 17 17"><circle cx="8.5" cy="8.5" r="7" fill="none" stroke="#777" stroke-width="1.2"/><path d="M8.5 4.5 V12.5 M4.5 8.5 H12.5" stroke="#777" stroke-width="1.4"/></svg>
<div class="r" style="left:933.5px;top:741px;width:1.2px;height:1.2px;background:#aaa;"></div>
<div class="r" style="left:933.5px;top:745px;width:1.2px;height:1.2px;background:#aaa;"></div>
<div class="r" style="left:933.5px;top:749px;width:1.2px;height:1.2px;background:#aaa;"></div>
<div class="r" style="left:949.2px;top:739.2px;width:251px;height:14px;background:#dcdcdc;"></div>
<div class="r" style="left:949.2px;top:739.2px;width:14px;height:14px;background:#fff;box-sizing:border-box;border:1px solid #c6c6c6;"></div>
<svg class="r" style="left:953px;top:742.5px;" width="5" height="8" viewBox="0 0 5 8"><path d="M4.5 0 L0.5 4 L4.5 8 Z" fill="#666"/></svg>
<div class="r" style="left:963.6px;top:739.2px;width:122px;height:14px;background:#fff;box-sizing:border-box;border:1px solid #c6c6c6;"></div>
<div class="r" style="left:1186.5px;top:739.2px;width:14px;height:14px;background:#fff;box-sizing:border-box;border:1px solid #c6c6c6;"></div>
<svg class="r" style="left:1191.5px;top:742.5px;" width="5" height="8" viewBox="0 0 5 8"><path d="M0.5 0 L4.5 4 L0.5 8 Z" fill="#666"/></svg>
<div class="r" style="left:0px;top:758.8px;width:1221px;height:20.2px;background:#f0f0f0;"></div>
<div class="r" style="left:0px;top:758.8px;width:1221px;height:1px;background:#dadada;"></div>
<div class="t" style="top:762.19px;font-size:11px;line-height:14px;height:14px;color:#555;font-weight:normal;left:7px;">Bereit</div>
<div class="r" style="left:937px;top:759.5px;width:36px;height:19.5px;background:#d4d4d4;"></div>
<svg class="r" style="left:948px;top:762.5px;" width="14" height="14" viewBox="0 0 14 14"><rect x="0.5" y="0.5" width="13" height="12" fill="none" stroke="#777"/><path d="M0.5 3.5 H13.5 M0.5 6.5 H13.5 M0.5 9.5 H13.5 M3.75 0.5 V12.5 M7 0.5 V12.5 M10.25 0.5 V12.5" stroke="#777"/></svg>
<svg class="r" style="left:984px;top:762.5px;" width="14" height="14" viewBox="0 0 14 14"><rect x="0.5" y="0.5" width="13" height="12" fill="none" stroke="#888"/><rect x="2.5" y="2.5" width="9" height="8" fill="none" stroke="#888"/><rect x="4.5" y="4.5" width="5" height="4" fill="#bbb"/></svg>
<svg class="r" style="left:1020px;top:762.5px;" width="14" height="14" viewBox="0 0 14 14"><rect x="0.5" y="0.5" width="13" height="12" fill="none" stroke="#777"/><path d="M0.5 6.5 H6.5 V0.5 M3.5 0.5 V6.5" fill="none" stroke="#777"/></svg>
<div class="r" style="left:1049px;top:769px;width:6px;height:1.5px;background:#666;"></div>
<div class="r" style="left:1060px;top:769px;width:94px;height:1px;background:#c4c4c4;"></div>
<div class="r" style="left:1105.5px;top:763.5px;width:3.5px;height:11px;background:#555;"></div>
<div class="r" style="left:1156.5px;top:769px;width:8px;height:1.5px;background:#555;"></div>
<div class="r" style="left:1159.75px;top:765.5px;width:1.5px;height:8px;background:#555;"></div>
<div class="t" style="top:763.47px;font-size:10.2px;line-height:13px;height:13px;color:#555;font-weight:normal;left:1175px;">100 %</div>
</body></html>
